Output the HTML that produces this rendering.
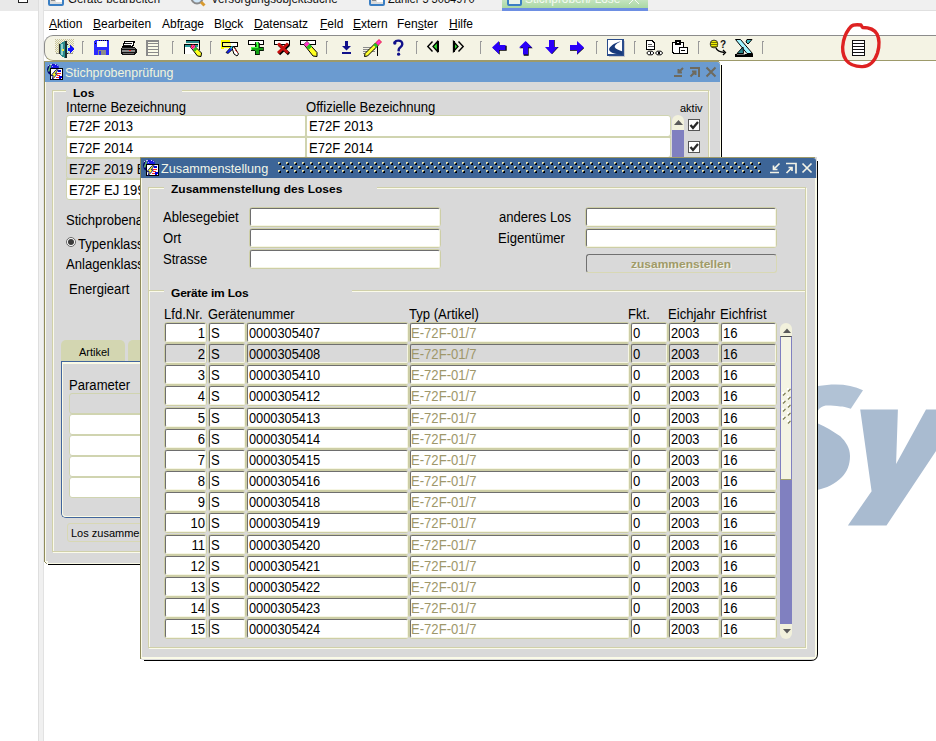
<!DOCTYPE html>
<html><head><meta charset="utf-8"><style>
html,body{margin:0;padding:0;width:936px;height:741px;overflow:hidden;background:#fff;position:relative;font-family:"Liberation Sans",sans-serif;}
.t{position:absolute;white-space:pre;font-family:"Liberation Sans",sans-serif;}
div{box-sizing:border-box;}
svg{overflow:visible}
.u{text-decoration:underline;text-underline-offset:1px;text-decoration-thickness:1px}
</style></head><body>
<div style="position:absolute;left:0px;top:0px;width:38px;height:11px;background:#e9e9e9"></div>
<div style="position:absolute;left:18px;top:-3px;width:10px;height:6px;border:1.5px solid #222;background:#fff"></div>
<div style="position:absolute;left:38px;top:0px;width:6px;height:741px;background:#f0f0f0;border-left:1px solid #dedede;border-right:1px solid #e2e2e2"></div>
<div style="position:absolute;left:44px;top:0px;width:892px;height:11px;background:#f0f0f0;border-bottom:1px solid #e0e0e0"></div>
<div style="position:absolute;left:48px;top:-6px;width:16px;height:12px;border:2px solid #3b7fc4;border-radius:2px;background:#dcdcdc"></div>
<div style="position:absolute;left:51px;top:0px;width:4px;height:1px;background:#8a8a8a"></div>
<div style="position:absolute;left:56px;top:-2px;width:6px;height:4px;background:#fff"></div>
<div class="t" style="left:68px;top:-8px;font-size:13px;line-height:13px;color:#111;transform:scaleX(0.88);transform-origin:0 0">Geräte bearbeiten</div>
<svg style="position:absolute;left:190px;top:-8px" width="16" height="15" viewBox="0 0 16 15" shape-rendering="crispEdges"><circle cx="7" cy="6" r="5.5" fill="#cfe6f7" stroke="#8a8a8a" stroke-width="2" shape-rendering="geometricPrecision"/><path d="M11 10 L14.5 13.5" stroke="#d89a30" stroke-width="3" shape-rendering="geometricPrecision"/></svg>
<div class="t" style="left:211px;top:-8px;font-size:13px;line-height:13px;color:#111;transform:scaleX(0.89);transform-origin:0 0">Versorgungsobjektsuche</div>
<div style="position:absolute;left:369px;top:-6px;width:16px;height:12px;border:2px solid #3b7fc4;border-radius:2px;background:#dcdcdc"></div>
<div style="position:absolute;left:372px;top:0px;width:4px;height:1px;background:#8a8a8a"></div>
<div style="position:absolute;left:377px;top:-2px;width:6px;height:4px;background:#fff"></div>
<div class="t" style="left:388px;top:-8px;font-size:13px;line-height:13px;color:#111;transform:scaleX(0.85);transform-origin:0 0">Zähler 5 3084970</div>
<div style="position:absolute;left:502px;top:0px;width:146px;height:11px;background:linear-gradient(#c4e4bf,#9fd39a)"></div>
<div style="position:absolute;left:502px;top:8px;width:146px;height:3px;background:#6d8fe3"></div>
<div style="position:absolute;left:507px;top:-6px;width:15px;height:12px;border:2px solid #3b7fc4;border-radius:2px;background:#eaf3ea"></div>
<div class="t" style="left:525px;top:-8px;font-size:13px;line-height:13px;color:#f4fbf2;transform:scaleX(0.91);transform-origin:0 0">Stichproben/ Lose</div>
<svg style="position:absolute;left:629px;top:-4px" width="11" height="9" viewBox="0 0 11 9" shape-rendering="crispEdges"><path d="M0 -2 L10 8 M10 -2 L0 8" stroke="#f6fbf6" stroke-width="1.3" fill="none"/></svg>
<div class="t" style="left:49px;top:18px;font-size:12px;line-height:12px;font-weight:normal;color:#000;"><span class="u">A</span>ktion</div>
<div class="t" style="left:93px;top:18px;font-size:12px;line-height:12px;font-weight:normal;color:#000;"><span class="u">B</span>earbeiten</div>
<div class="t" style="left:162px;top:18px;font-size:12px;line-height:12px;font-weight:normal;color:#000;">Abf<span class="u">r</span>age</div>
<div class="t" style="left:214px;top:18px;font-size:12px;line-height:12px;font-weight:normal;color:#000;">Bl<span class="u">o</span>ck</div>
<div class="t" style="left:254px;top:18px;font-size:12px;line-height:12px;font-weight:normal;color:#000;"><span class="u">D</span>atensatz</div>
<div class="t" style="left:320px;top:18px;font-size:12px;line-height:12px;font-weight:normal;color:#000;"><span class="u">F</span>eld</div>
<div class="t" style="left:353px;top:18px;font-size:12px;line-height:12px;font-weight:normal;color:#000;"><span class="u">E</span>xtern</div>
<div class="t" style="left:397px;top:18px;font-size:12px;line-height:12px;font-weight:normal;color:#000;">Fen<span class="u">s</span>ter</div>
<div class="t" style="left:449px;top:18px;font-size:12px;line-height:12px;font-weight:normal;color:#000;"><span class="u">H</span>ilfe</div>
<div style="position:absolute;left:44px;top:35px;width:892px;height:26px;background:#f4f3e4;border-top:1px solid #8c8c8c;border-bottom:1px solid #9d9a6a;border-left:1px solid #8c8c8c;border-radius:9px 0 0 9px"></div>
<div style="position:absolute;left:82px;top:41px;width:1px;height:13px;background:#9a9a9a"></div>
<div style="position:absolute;left:82px;top:41px;width:2px;height:1px;background:#9a9a9a"></div>
<div style="position:absolute;left:172px;top:41px;width:1px;height:13px;background:#9a9a9a"></div>
<div style="position:absolute;left:172px;top:41px;width:2px;height:1px;background:#9a9a9a"></div>
<div style="position:absolute;left:210px;top:41px;width:1px;height:13px;background:#9a9a9a"></div>
<div style="position:absolute;left:210px;top:41px;width:2px;height:1px;background:#9a9a9a"></div>
<div style="position:absolute;left:326px;top:41px;width:1px;height:13px;background:#9a9a9a"></div>
<div style="position:absolute;left:326px;top:41px;width:2px;height:1px;background:#9a9a9a"></div>
<div style="position:absolute;left:416px;top:41px;width:1px;height:13px;background:#9a9a9a"></div>
<div style="position:absolute;left:416px;top:41px;width:2px;height:1px;background:#9a9a9a"></div>
<div style="position:absolute;left:480px;top:41px;width:1px;height:13px;background:#9a9a9a"></div>
<div style="position:absolute;left:480px;top:41px;width:2px;height:1px;background:#9a9a9a"></div>
<div style="position:absolute;left:596px;top:41px;width:1px;height:13px;background:#9a9a9a"></div>
<div style="position:absolute;left:596px;top:41px;width:2px;height:1px;background:#9a9a9a"></div>
<div style="position:absolute;left:634px;top:41px;width:1px;height:13px;background:#9a9a9a"></div>
<div style="position:absolute;left:634px;top:41px;width:2px;height:1px;background:#9a9a9a"></div>
<div style="position:absolute;left:698px;top:41px;width:1px;height:13px;background:#9a9a9a"></div>
<div style="position:absolute;left:698px;top:41px;width:2px;height:1px;background:#9a9a9a"></div>
<div style="position:absolute;left:762px;top:41px;width:1px;height:13px;background:#9a9a9a"></div>
<div style="position:absolute;left:762px;top:41px;width:2px;height:1px;background:#9a9a9a"></div>
<svg style="position:absolute;left:55px;top:39px" width="19" height="19" viewBox="0 0 19 19" shape-rendering="crispEdges"><rect x="0" y="0" width="1" height="1" fill="#c9c59b"/><rect x="2" y="0" width="1" height="1" fill="#c9c59b"/><rect x="4" y="0" width="1" height="1" fill="#c9c59b"/><rect x="6" y="0" width="1" height="1" fill="#c9c59b"/><rect x="8" y="0" width="1" height="1" fill="#c9c59b"/><rect x="10" y="0" width="1" height="1" fill="#c9c59b"/><rect x="12" y="0" width="1" height="1" fill="#c9c59b"/><rect x="14" y="0" width="1" height="1" fill="#c9c59b"/><rect x="16" y="0" width="1" height="1" fill="#c9c59b"/><rect x="18" y="0" width="1" height="1" fill="#c9c59b"/><rect x="1" y="1" width="1" height="1" fill="#c9c59b"/><rect x="3" y="1" width="1" height="1" fill="#c9c59b"/><rect x="5" y="1" width="1" height="1" fill="#c9c59b"/><rect x="7" y="1" width="1" height="1" fill="#c9c59b"/><rect x="9" y="1" width="1" height="1" fill="#c9c59b"/><rect x="11" y="1" width="1" height="1" fill="#c9c59b"/><rect x="13" y="1" width="1" height="1" fill="#c9c59b"/><rect x="15" y="1" width="1" height="1" fill="#c9c59b"/><rect x="17" y="1" width="1" height="1" fill="#c9c59b"/><rect x="0" y="2" width="1" height="1" fill="#c9c59b"/><rect x="2" y="2" width="1" height="1" fill="#c9c59b"/><rect x="4" y="2" width="1" height="1" fill="#c9c59b"/><rect x="6" y="2" width="1" height="1" fill="#c9c59b"/><rect x="8" y="2" width="1" height="1" fill="#c9c59b"/><rect x="10" y="2" width="1" height="1" fill="#c9c59b"/><rect x="12" y="2" width="1" height="1" fill="#c9c59b"/><rect x="14" y="2" width="1" height="1" fill="#c9c59b"/><rect x="16" y="2" width="1" height="1" fill="#c9c59b"/><rect x="18" y="2" width="1" height="1" fill="#c9c59b"/><rect x="1" y="3" width="1" height="1" fill="#c9c59b"/><rect x="3" y="3" width="1" height="1" fill="#c9c59b"/><rect x="5" y="3" width="1" height="1" fill="#c9c59b"/><rect x="7" y="3" width="1" height="1" fill="#c9c59b"/><rect x="9" y="3" width="1" height="1" fill="#c9c59b"/><rect x="11" y="3" width="1" height="1" fill="#c9c59b"/><rect x="13" y="3" width="1" height="1" fill="#c9c59b"/><rect x="15" y="3" width="1" height="1" fill="#c9c59b"/><rect x="17" y="3" width="1" height="1" fill="#c9c59b"/><rect x="0" y="4" width="1" height="1" fill="#c9c59b"/><rect x="2" y="4" width="1" height="1" fill="#c9c59b"/><rect x="4" y="4" width="1" height="1" fill="#c9c59b"/><rect x="6" y="4" width="1" height="1" fill="#c9c59b"/><rect x="8" y="4" width="1" height="1" fill="#c9c59b"/><rect x="10" y="4" width="1" height="1" fill="#c9c59b"/><rect x="12" y="4" width="1" height="1" fill="#c9c59b"/><rect x="14" y="4" width="1" height="1" fill="#c9c59b"/><rect x="16" y="4" width="1" height="1" fill="#c9c59b"/><rect x="18" y="4" width="1" height="1" fill="#c9c59b"/><rect x="1" y="5" width="1" height="1" fill="#c9c59b"/><rect x="3" y="5" width="1" height="1" fill="#c9c59b"/><rect x="5" y="5" width="1" height="1" fill="#c9c59b"/><rect x="7" y="5" width="1" height="1" fill="#c9c59b"/><rect x="9" y="5" width="1" height="1" fill="#c9c59b"/><rect x="11" y="5" width="1" height="1" fill="#c9c59b"/><rect x="13" y="5" width="1" height="1" fill="#c9c59b"/><rect x="15" y="5" width="1" height="1" fill="#c9c59b"/><rect x="17" y="5" width="1" height="1" fill="#c9c59b"/><rect x="0" y="6" width="1" height="1" fill="#c9c59b"/><rect x="2" y="6" width="1" height="1" fill="#c9c59b"/><rect x="4" y="6" width="1" height="1" fill="#c9c59b"/><rect x="6" y="6" width="1" height="1" fill="#c9c59b"/><rect x="8" y="6" width="1" height="1" fill="#c9c59b"/><rect x="10" y="6" width="1" height="1" fill="#c9c59b"/><rect x="12" y="6" width="1" height="1" fill="#c9c59b"/><rect x="14" y="6" width="1" height="1" fill="#c9c59b"/><rect x="16" y="6" width="1" height="1" fill="#c9c59b"/><rect x="18" y="6" width="1" height="1" fill="#c9c59b"/><rect x="1" y="7" width="1" height="1" fill="#c9c59b"/><rect x="3" y="7" width="1" height="1" fill="#c9c59b"/><rect x="5" y="7" width="1" height="1" fill="#c9c59b"/><rect x="7" y="7" width="1" height="1" fill="#c9c59b"/><rect x="9" y="7" width="1" height="1" fill="#c9c59b"/><rect x="11" y="7" width="1" height="1" fill="#c9c59b"/><rect x="13" y="7" width="1" height="1" fill="#c9c59b"/><rect x="15" y="7" width="1" height="1" fill="#c9c59b"/><rect x="17" y="7" width="1" height="1" fill="#c9c59b"/><rect x="0" y="8" width="1" height="1" fill="#c9c59b"/><rect x="2" y="8" width="1" height="1" fill="#c9c59b"/><rect x="4" y="8" width="1" height="1" fill="#c9c59b"/><rect x="6" y="8" width="1" height="1" fill="#c9c59b"/><rect x="8" y="8" width="1" height="1" fill="#c9c59b"/><rect x="10" y="8" width="1" height="1" fill="#c9c59b"/><rect x="12" y="8" width="1" height="1" fill="#c9c59b"/><rect x="14" y="8" width="1" height="1" fill="#c9c59b"/><rect x="16" y="8" width="1" height="1" fill="#c9c59b"/><rect x="18" y="8" width="1" height="1" fill="#c9c59b"/><rect x="1" y="9" width="1" height="1" fill="#c9c59b"/><rect x="3" y="9" width="1" height="1" fill="#c9c59b"/><rect x="5" y="9" width="1" height="1" fill="#c9c59b"/><rect x="7" y="9" width="1" height="1" fill="#c9c59b"/><rect x="9" y="9" width="1" height="1" fill="#c9c59b"/><rect x="11" y="9" width="1" height="1" fill="#c9c59b"/><rect x="13" y="9" width="1" height="1" fill="#c9c59b"/><rect x="15" y="9" width="1" height="1" fill="#c9c59b"/><rect x="17" y="9" width="1" height="1" fill="#c9c59b"/><rect x="0" y="10" width="1" height="1" fill="#c9c59b"/><rect x="2" y="10" width="1" height="1" fill="#c9c59b"/><rect x="4" y="10" width="1" height="1" fill="#c9c59b"/><rect x="6" y="10" width="1" height="1" fill="#c9c59b"/><rect x="8" y="10" width="1" height="1" fill="#c9c59b"/><rect x="10" y="10" width="1" height="1" fill="#c9c59b"/><rect x="12" y="10" width="1" height="1" fill="#c9c59b"/><rect x="14" y="10" width="1" height="1" fill="#c9c59b"/><rect x="16" y="10" width="1" height="1" fill="#c9c59b"/><rect x="18" y="10" width="1" height="1" fill="#c9c59b"/><rect x="1" y="11" width="1" height="1" fill="#c9c59b"/><rect x="3" y="11" width="1" height="1" fill="#c9c59b"/><rect x="5" y="11" width="1" height="1" fill="#c9c59b"/><rect x="7" y="11" width="1" height="1" fill="#c9c59b"/><rect x="9" y="11" width="1" height="1" fill="#c9c59b"/><rect x="11" y="11" width="1" height="1" fill="#c9c59b"/><rect x="13" y="11" width="1" height="1" fill="#c9c59b"/><rect x="15" y="11" width="1" height="1" fill="#c9c59b"/><rect x="17" y="11" width="1" height="1" fill="#c9c59b"/><rect x="0" y="12" width="1" height="1" fill="#c9c59b"/><rect x="2" y="12" width="1" height="1" fill="#c9c59b"/><rect x="4" y="12" width="1" height="1" fill="#c9c59b"/><rect x="6" y="12" width="1" height="1" fill="#c9c59b"/><rect x="8" y="12" width="1" height="1" fill="#c9c59b"/><rect x="10" y="12" width="1" height="1" fill="#c9c59b"/><rect x="12" y="12" width="1" height="1" fill="#c9c59b"/><rect x="14" y="12" width="1" height="1" fill="#c9c59b"/><rect x="16" y="12" width="1" height="1" fill="#c9c59b"/><rect x="18" y="12" width="1" height="1" fill="#c9c59b"/><rect x="1" y="13" width="1" height="1" fill="#c9c59b"/><rect x="3" y="13" width="1" height="1" fill="#c9c59b"/><rect x="5" y="13" width="1" height="1" fill="#c9c59b"/><rect x="7" y="13" width="1" height="1" fill="#c9c59b"/><rect x="9" y="13" width="1" height="1" fill="#c9c59b"/><rect x="11" y="13" width="1" height="1" fill="#c9c59b"/><rect x="13" y="13" width="1" height="1" fill="#c9c59b"/><rect x="15" y="13" width="1" height="1" fill="#c9c59b"/><rect x="17" y="13" width="1" height="1" fill="#c9c59b"/><rect x="3" y="4" width="10" height="10" fill="#d6d2a4"/><rect x="1" y="14" width="17" height="1" fill="#9a9a90"/><rect x="4" y="5" width="2" height="10" fill="#222"/><rect x="10" y="5" width="3" height="2" fill="#222"/><rect x="12" y="5" width="1" height="10" fill="#222"/><path d="M5 5 L10 2 V19 L5 16 Z" fill="#2a8c8c"/><path d="M6 5.5 L8 4.5 V16.5 L6 15.5 Z" fill="#8fd0d0"/><rect x="10" y="2" width="1.5" height="17" fill="#1a3030"/><rect x="11.5" y="6" width="1" height="8" fill="#8ef4ff"/><rect x="7" y="10" width="2" height="2" fill="#f0f040"/><path d="M12.5 8.5 H15 V6 L19 10 L15 14 V11.5 H12.5 Z" fill="#1010ff"/></svg>
<svg style="position:absolute;left:94px;top:40px" width="15" height="15" viewBox="0 0 15 15" shape-rendering="crispEdges"><path d="M1 0 H15 V15 H0 V1 Z" fill="#2a2aff"/><rect x="3" y="1" width="10" height="6" fill="#fff"/><rect x="5" y="0" width="1" height="1" fill="#000"/><rect x="7" y="0" width="1" height="1" fill="#000"/><rect x="9" y="0" width="1" height="1" fill="#000"/><rect x="11" y="0" width="1" height="1" fill="#000"/><rect x="13" y="0" width="1" height="1" fill="#000"/><rect x="1" y="3" width="1" height="1" fill="#000"/><rect x="4" y="10" width="8" height="5" fill="#8a8a8a"/><rect x="5" y="11" width="2" height="4" fill="#2a2aff"/></svg>
<svg style="position:absolute;left:120px;top:41px" width="17" height="15" viewBox="0 0 17 15" shape-rendering="crispEdges"><path d="M5 0.5 H14.5 L12.5 6 H2.5 Z" fill="#fff" stroke="#000" stroke-width="1.2" stroke-linejoin="round"/><path d="M5 2.5 H12 M4 4 H11" stroke="#000" stroke-width="0.9"/><path d="M2 6 H15 L16.5 8 V12 L15 14 H2 L0.5 12 V8 Z" fill="#111"/><rect x="2" y="9" width="13" height="2" fill="#8a8a8a"/><rect x="9" y="9" width="2" height="1" fill="#ff2020"/><path d="M2 7 H15" stroke="#6a6a6a" stroke-width="1"/><path d="M3 12.5 H14" stroke="#6a6a6a" stroke-width="1"/></svg>
<svg style="position:absolute;left:146px;top:40px" width="13" height="16" viewBox="0 0 13 16" shape-rendering="crispEdges"><rect x="0.75" y="0.75" width="11.5" height="14.5" fill="#fafae8" stroke="#8a8a8a" stroke-width="1.5"/><path d="M1 3.75 H12 M1 6.75 H12 M1 9.75 H12 M1 12.5 H12" stroke="#8a8a8a" stroke-width="1.3"/></svg>
<svg style="position:absolute;left:184px;top:40px" width="18" height="17" viewBox="0 0 18 17" shape-rendering="crispEdges"><path d="M1.5 0.5 H15.5 V10" fill="none" stroke="#000" stroke-width="1"/><rect x="2" y="1" width="13" height="2" fill="#2a8a8a"/><rect x="0" y="4" width="14" height="1" fill="#000"/><rect x="0" y="5" width="14" height="2" fill="#2a9a9a"/><rect x="1" y="7" width="13" height="7" fill="#fff"/><rect x="0" y="4" width="1" height="10" fill="#000"/><path d="M6.5 7 L9 4.5 L17.5 13 L17 16.5 L13.5 16 Z" fill="#ffff20" stroke="#000" stroke-width="1" stroke-linejoin="round" shape-rendering="geometricPrecision"/><path d="M6.5 7 L9 4.5 L11.5 7 L9 9.5 Z" fill="#ff30d0" shape-rendering="geometricPrecision"/><path d="M7 6.5 L8 5.5 M8 8 L10.5 5.5" stroke="#ff2020" stroke-width="1"/><path d="M9 9.5 L11.5 7 L13.5 9 L11 11.5 Z" fill="#20c020" shape-rendering="geometricPrecision"/></svg>
<svg style="position:absolute;left:221px;top:40px" width="19" height="17" viewBox="0 0 19 17" shape-rendering="crispEdges"><path d="M0 0 H9 V8 H4 L2 9 H0 Z" fill="#ffff00"/><rect x="1.5" y="2.5" width="15" height="4" fill="#fff" stroke="#000" stroke-width="1"/><rect x="2" y="3" width="8" height="3" fill="#f4f0a0"/><rect x="3" y="3" width="1" height="1" fill="#ffff80"/><rect x="5" y="3" width="1" height="1" fill="#ffff80"/><rect x="7" y="3" width="1" height="1" fill="#ffff80"/><rect x="9" y="3" width="1" height="1" fill="#ffff80"/><rect x="2" y="4" width="1" height="1" fill="#ffff80"/><rect x="4" y="4" width="1" height="1" fill="#ffff80"/><rect x="6" y="4" width="1" height="1" fill="#ffff80"/><rect x="8" y="4" width="1" height="1" fill="#ffff80"/><rect x="3" y="5" width="1" height="1" fill="#ffff80"/><rect x="5" y="5" width="1" height="1" fill="#ffff80"/><rect x="7" y="5" width="1" height="1" fill="#ffff80"/><rect x="9" y="5" width="1" height="1" fill="#ffff80"/><path d="M5 12.5 L11 6 L13 8 L7 13.5 Z" fill="#1020ff" stroke="#000" stroke-width="0.8" shape-rendering="geometricPrecision"/><path d="M9 8 L11 6 L12.5 7.5 L10.5 9.5 Z" fill="#30e0ff" shape-rendering="geometricPrecision"/><path d="M11 8 L13 6.5 L17.5 14 L16 16 L13 14 Z" fill="#fff" stroke="#000" stroke-width="1" shape-rendering="geometricPrecision"/><path d="M13.5 8 L16.5 13" stroke="#e02020" stroke-width="0.8"/></svg>
<svg style="position:absolute;left:248px;top:40px" width="17" height="15" viewBox="0 0 17 15" shape-rendering="crispEdges"><rect x="0.5" y="0.5" width="15" height="4" fill="#fff" stroke="#000" stroke-width="1.3"/><path d="M7 2.5 H11 V7 H15 V10.5 H11 V14.5 H7 V10.5 H3 V7 H7 Z" fill="#10a010" stroke="#000" stroke-width="0.8"/><path d="M7.5 3 H9.5 V7.5 H3.5 V9.5 M9.5 7.5" stroke="#40ff40" stroke-width="1.3" fill="none"/></svg>
<svg style="position:absolute;left:274px;top:40px" width="17" height="15" viewBox="0 0 17 15" shape-rendering="crispEdges"><rect x="0.5" y="0.5" width="15" height="4" fill="#fff" stroke="#000" stroke-width="1.3"/><path d="M5 4.5 L15 14 M15 4.5 L5 14" stroke="#000" stroke-width="3.2" shape-rendering="geometricPrecision"/><path d="M4 3.5 L14 13 M14 3.5 L4 13" stroke="#c81010" stroke-width="3" shape-rendering="geometricPrecision"/></svg>
<svg style="position:absolute;left:300px;top:40px" width="18" height="17" viewBox="0 0 18 17" shape-rendering="crispEdges"><rect x="0.5" y="0.5" width="15" height="4" fill="#fff" stroke="#000" stroke-width="1.3"/><path d="M4 4.5 L7 1.5 L17 12.5 L17 16.5 L13 16 Z" fill="#ffff20" stroke="#000" stroke-width="1" stroke-linejoin="round" shape-rendering="geometricPrecision"/><path d="M4 4.5 L7 1.5 L9.5 4 L6.5 7 Z" fill="#ff30d0" shape-rendering="geometricPrecision"/><path d="M6.5 7 L9.5 4 L12 6.5 L9 9.5 Z" fill="#20c020" shape-rendering="geometricPrecision"/></svg>
<svg style="position:absolute;left:342px;top:41px" width="9" height="13" viewBox="0 0 9 13" shape-rendering="crispEdges"><rect x="3" y="0" width="3" height="5" fill="#10108a"/><path d="M0 5 H9 L4.5 9.5 Z" fill="#10108a" shape-rendering="geometricPrecision"/><rect x="0" y="11" width="9" height="1.6" fill="#10108a"/></svg>
<svg style="position:absolute;left:363px;top:39px" width="19" height="18" viewBox="0 0 19 18" shape-rendering="crispEdges"><path d="M0 8.5 H12 M0 10.5 H12 M0 12.5 H12 M0 14.5 H6" stroke="#8a8a8a" stroke-width="1"/><rect x="13.5" y="6" width="1.3" height="11" fill="#000"/><path d="M2 14.5 L12.5 4 L15 6.5 L4.5 17 L1.5 17.5 Z" fill="#ffff30" stroke="#000" stroke-width="1" stroke-linejoin="round" shape-rendering="geometricPrecision"/><path d="M12.5 4 L16 0.5 L18.5 3 L15 6.5 Z" fill="#ff30d0" stroke="#e01010" stroke-width="0.8" shape-rendering="geometricPrecision"/><path d="M10.5 6 L12.5 4 L15 6.5 L13 8.5 Z" fill="#20c020" shape-rendering="geometricPrecision"/></svg>
<svg style="position:absolute;left:393px;top:40px" width="11" height="16" viewBox="0 0 11 16" shape-rendering="crispEdges"><circle cx="1.8" cy="3" r="1.7" fill="#10108a" shape-rendering="geometricPrecision"/><path d="M1.5 2.5 C2.5 0.8 4 0.6 5.2 0.6 C7.8 0.6 9.3 2.2 9.3 4.2 C9.3 6.6 6.2 7.6 5.8 9.2 L5.6 11.3" stroke="#10108a" stroke-width="2.4" fill="none" shape-rendering="geometricPrecision"/><circle cx="5.6" cy="14.2" r="1.6" fill="#10108a" shape-rendering="geometricPrecision"/></svg>
<svg style="position:absolute;left:427px;top:41px" width="12" height="12" viewBox="0 0 12 12" shape-rendering="crispEdges"><path d="M5.5 0.5 L0.8 5.5 L5.5 10.5" fill="none" stroke="#000" stroke-width="1.4" shape-rendering="geometricPrecision"/><path d="M10.5 0.5 L6 5.5 L10.5 10.5 Z" fill="#30e030" stroke="#000" stroke-width="1.3" shape-rendering="geometricPrecision"/><rect x="9.5" y="0" width="2" height="11" fill="#000"/></svg>
<svg style="position:absolute;left:453px;top:41px" width="12" height="12" viewBox="0 0 12 12" shape-rendering="crispEdges"><path d="M5.5 0.5 L10.2 5.5 L5.5 10.5" fill="none" stroke="#000" stroke-width="1.4" shape-rendering="geometricPrecision"/><path d="M0.5 0.5 L5 5.5 L0.5 10.5 Z" fill="#30e030" stroke="#000" stroke-width="1.3" shape-rendering="geometricPrecision"/><rect x="0" y="0" width="1.5" height="11" fill="#000"/></svg>
<svg style="position:absolute;left:492px;top:41px" width="14" height="14" viewBox="0 0 14 14" shape-rendering="crispEdges"><path d="M0.5 6.5 L7 0 V4 H14 V9 H7 V13 Z" fill="#000" transform="translate(0.7,0.7)" shape-rendering="geometricPrecision"/><path d="M0 6.5 L7 0 V4 H13.5 V9 H7 V13 Z" fill="#2a00f8" shape-rendering="geometricPrecision"/></svg>
<svg style="position:absolute;left:519px;top:41px" width="14" height="15" viewBox="0 0 14 15" shape-rendering="crispEdges"><path d="M6.5 0 L13 6.5 H9 V14 H4 V6.5 H0 Z" fill="#000" transform="translate(0.7,0.7)" shape-rendering="geometricPrecision"/><path d="M6.5 0 L13 6.5 H9 V13.5 H4 V6.5 H0 Z" fill="#2a00f8" shape-rendering="geometricPrecision"/></svg>
<svg style="position:absolute;left:545px;top:40px" width="14" height="15" viewBox="0 0 14 15" shape-rendering="crispEdges"><path d="M6.5 14 L13 7 H9 V0 H4 V7 H0 Z" fill="#000" transform="translate(0.7,0)" shape-rendering="geometricPrecision"/><path d="M6.5 14 L13 7 H9 V0 H4 V7 H0 Z" fill="#2a00f8" shape-rendering="geometricPrecision"/></svg>
<svg style="position:absolute;left:570px;top:41px" width="15" height="14" viewBox="0 0 15 14" shape-rendering="crispEdges"><path d="M14 6.5 L7 0 V4 H0 V9 H7 V13 Z" fill="#000" transform="translate(0,0.7)" shape-rendering="geometricPrecision"/><path d="M14 6.5 L7 0 V4 H0 V9 H7 V13 Z" fill="#2a00f8" shape-rendering="geometricPrecision"/></svg>
<svg style="position:absolute;left:607px;top:39px" width="18" height="18" viewBox="0 0 18 18" shape-rendering="crispEdges"><rect x="1.5" y="1.5" width="16.5" height="16.5" fill="#cacaca"/><rect x="0.5" y="0.5" width="15.5" height="15.5" fill="#fff" stroke="#2a4c8c" stroke-width="1.1"/><path d="M13.7 2.6 C9 3.2 4 6.5 2.2 9.5 C1.5 12.2 5 14.2 10 15.1 L15.6 16 L15.6 12.6 C12 11.2 8.6 10 7.8 8.2 C7.4 6.5 10 4.3 13.7 2.6 Z" fill="#183a7c" shape-rendering="geometricPrecision"/></svg>
<svg style="position:absolute;left:646px;top:40px" width="18" height="16" viewBox="0 0 18 16" shape-rendering="crispEdges"><path d="M0.6 0.6 H6 L8.8 3.4 V9.4 H0.6 Z" fill="#fff" stroke="#000" stroke-width="1.2"/><path d="M2 4.5 H6 M2 6.5 H7.5" stroke="#555" stroke-width="1"/><path d="M0.8 13 L2.3 11.2 H6.3 L7.8 13 L6.3 14.8 H2.3 Z" fill="#fff" stroke="#000" stroke-width="1" shape-rendering="geometricPrecision"/><path d="M9.6 13 L11.1 11.2 H15.1 L16.6 13 L15.1 14.8 H11.1 Z" fill="#fff" stroke="#000" stroke-width="1" shape-rendering="geometricPrecision"/><rect x="3.6" y="12.4" width="1.6" height="1.2" fill="#000"/><rect x="12.4" y="12.4" width="1.6" height="1.2" fill="#000"/></svg>
<svg style="position:absolute;left:672px;top:40px" width="16" height="14" viewBox="0 0 16 14" shape-rendering="crispEdges"><rect x="0.7" y="2.2" width="11" height="11" rx="1.5" fill="#fff" stroke="#000" stroke-width="1.4"/><path d="M4 3 V1 H8 V3" fill="#fff" stroke="#000" stroke-width="1.2"/><rect x="3" y="3" width="6" height="1.5" fill="#000"/><rect x="7.7" y="7.7" width="7.5" height="5.5" fill="#fff" stroke="#000" stroke-width="1.4"/><path d="M9 10 H13" stroke="#000" stroke-width="1"/></svg>
<svg style="position:absolute;left:710px;top:40px" width="17" height="15" viewBox="0 0 17 15" shape-rendering="crispEdges"><ellipse cx="4" cy="4" rx="3.8" ry="3.9" fill="#f0f000" stroke="#333" stroke-width="1" shape-rendering="geometricPrecision"/><path d="M0.5 2.5 H7.5 M0.5 4.5 H7.5 M0.5 6.5 H7.5" stroke="#6a6a00" stroke-width="0.9"/><path d="M6 8 C7 11 10 12 14.5 12.5" stroke="#000" stroke-width="1.4" fill="none" shape-rendering="geometricPrecision"/><path d="M13 10 L15.5 12.5 L13 15" stroke="#000" stroke-width="1.3" fill="none" shape-rendering="geometricPrecision"/></svg>
<div class="t" style="left:720px;top:40px;font-size:10px;line-height:10px;font-weight:bold;color:#111">?</div>
<svg style="position:absolute;left:735px;top:39px" width="19" height="18" viewBox="0 0 19 18" shape-rendering="crispEdges"><path d="M0.5 0.5 H5.5 L17.5 14.5 H12 Z" fill="#a0f4ff" stroke="#000" stroke-width="1" shape-rendering="geometricPrecision"/><path d="M12 0.5 H17 L13 5 L11 3 Z" fill="#40c0c8" stroke="#000" stroke-width="1" shape-rendering="geometricPrecision"/><path d="M8 8 L2 14.5 H8.5 Z" fill="#2a8a90" stroke="#000" stroke-width="1" shape-rendering="geometricPrecision"/><rect x="0" y="14.5" width="18" height="3" fill="#000"/><rect x="2" y="14.5" width="8" height="1" fill="#707070"/></svg>
<svg style="position:absolute;left:852px;top:40px" width="13" height="16" viewBox="0 0 13 16" shape-rendering="crispEdges"><rect x="0.5" y="0.5" width="12" height="15" fill="#fff" stroke="#111" stroke-width="1.2"/><path d="M1 3.5 H12 M1 6.5 H12 M1 9.5 H12 M1 12.5 H12" stroke="#111" stroke-width="1.2"/></svg>
<div style="position:absolute;left:44px;top:61px;width:677px;height:503px;background:#d9d9d9;border-radius:0 0 0 4px"></div>
<div style="position:absolute;left:44px;top:61px;width:1px;height:500px;background:#8f8b5c"></div>
<div style="position:absolute;left:45px;top:82px;width:1px;height:480px;background:#fbfbe8"></div>
<div style="position:absolute;left:720px;top:62px;width:1px;height:502px;background:#fbfbe8"></div>
<div style="position:absolute;left:46px;top:563px;width:675px;height:1px;background:#fbfbe8"></div>
<div style="position:absolute;left:721px;top:65px;width:1px;height:500px;background:#000"></div>
<div style="position:absolute;left:48px;top:564px;width:674px;height:1px;background:#000"></div>
<div style="position:absolute;left:44px;top:561px;width:4px;height:4px;background:#fff"></div>
<div style="position:absolute;left:46px;top:561px;width:2px;height:2px;background:#fbfbe8"></div>
<div style="position:absolute;left:44px;top:561px;width:1px;height:1px;background:#8f8b5c"></div>
<div style="position:absolute;left:45px;top:562px;width:1px;height:1px;background:#8f8b5c"></div>
<div style="position:absolute;left:46px;top:563px;width:1px;height:1px;background:#a0a080"></div>
<div style="position:absolute;left:44px;top:61px;width:675px;height:1px;background:#9d9a6a"></div>
<div style="position:absolute;left:719px;top:61px;width:3px;height:4px;background:#fff"></div>
<div style="position:absolute;left:719px;top:62px;width:1px;height:1px;background:#b8b490"></div>
<div style="position:absolute;left:720px;top:63px;width:1px;height:2px;background:#fbfbe8"></div>
<div style="position:absolute;left:45px;top:62px;width:675px;height:20px;background:#6b9bd0;border-radius:0 3px 0 0"></div>
<svg style="position:absolute;left:44px;top:60px" width="24" height="24" viewBox="0 0 24 24" shape-rendering="crispEdges"><circle cx="8.8" cy="9.6" r="5.8" fill="#000070" shape-rendering="geometricPrecision"/><ellipse cx="10.2" cy="7.2" rx="4.6" ry="3.2" fill="#1818e0" shape-rendering="geometricPrecision"/><rect x="4" y="5" width="1" height="1" fill="#c8b8ff"/><rect x="6" y="4" width="2" height="1" fill="#c8b8ff"/><rect x="8" y="6" width="1" height="1" fill="#b0a0ff"/><rect x="11" y="4" width="1" height="1" fill="#d0c8ff"/><rect x="13" y="5" width="1" height="1" fill="#9090ff"/><path d="M6.8 5 L4.5 11.5" stroke="#5aa870" stroke-width="1.8" shape-rendering="geometricPrecision"/><rect x="6.6" y="8.4" width="12" height="11.2" fill="#fff" stroke="#000" stroke-width="1.2"/><path d="M12 9.8 L14.2 9.8 L11.2 13.8 L13.4 13.8 L8.2 19.6 L9.2 15.6 L7 15.6 Z" fill="#ffff20" stroke="#00007a" stroke-width="0.9" stroke-linejoin="round" shape-rendering="geometricPrecision"/><rect x="14" y="10" width="3" height="2" fill="#0000d8"/><rect x="13" y="13" width="4" height="1" fill="#ff2020"/><rect x="13" y="15" width="3" height="1" fill="#ff2020"/><rect x="12" y="17" width="3" height="1" fill="#ff2020"/><rect x="15" y="16" width="3" height="3" fill="#0000d8"/><rect x="17" y="18" width="1" height="1" fill="#fff"/></svg>
<div class="t" style="left:65px;top:66px;font-size:13px;line-height:13px;color:#f0f4dc;transform:scaleX(0.955);transform-origin:0 0">Stichprobenprüfung</div>
<svg style="position:absolute;left:674px;top:67px" width="44" height="11" viewBox="0 0 44 11" shape-rendering="crispEdges"><g stroke="#6e6a5e" stroke-width="2" fill="none" shape-rendering="geometricPrecision"><path d="M0 9 H8 M9 1 L4.5 5.5 M4.5 2 V5.5 H8"/><path d="M16 1 H25 V10 M16.5 9.5 L21.5 4.5 M18 4.5 H21.5 V8"/><path d="M32.5 0.5 L41.5 9.5 M41.5 0.5 L32.5 9.5"/></g></svg>
<div style="position:absolute;left:53px;top:91px;width:657px;height:462px;border:1px solid #fbfbea"></div>
<div style="position:absolute;left:52px;top:90px;width:657px;height:462px;border:1px solid #d0d0aa"></div>
<div style="position:absolute;left:66px;top:89px;width:116px;height:4px;background:#d9d9d9"></div>
<div class="t" style="left:73px;top:88px;font-size:12px;line-height:12px;font-weight:bold;color:#000;transform:scaleY(0.9);transform-origin:0 1px;">Los</div>
<div class="t" style="left:66px;top:100px;font-size:14px;line-height:14px;font-weight:normal;color:#000;transform:scaleX(0.935);transform-origin:0 0;">Interne Bezeichnung</div>
<div class="t" style="left:306px;top:100px;font-size:14px;line-height:14px;font-weight:normal;color:#000;transform:scaleX(0.935);transform-origin:0 0;">Offizielle Bezeichnung</div>
<div class="t" style="left:680px;top:103px;font-size:11px;line-height:11px;color:#000">aktiv</div>
<div style="position:absolute;left:66px;top:115px;width:241px;height:22px;background:#fff;border:1px solid #d0d4b0;border-radius:3px"></div>
<div style="position:absolute;left:305px;top:115px;width:366px;height:22px;background:#fff;border:1px solid #d0d4b0;border-radius:3px"></div>
<div class="t" style="left:69px;top:119px;font-size:14px;line-height:14px;font-weight:normal;color:#000;transform:scaleX(0.935);transform-origin:0 0;">E72F 2013</div>
<div class="t" style="left:309px;top:119px;font-size:14px;line-height:14px;font-weight:normal;color:#000;transform:scaleX(0.935);transform-origin:0 0;">E72F 2013</div>
<div style="position:absolute;left:66px;top:136px;width:241px;height:22px;background:#fff;border:1px solid #d0d4b0;border-radius:3px"></div>
<div style="position:absolute;left:305px;top:136px;width:366px;height:22px;background:#fff;border:1px solid #d0d4b0;border-radius:3px"></div>
<div style="position:absolute;left:66px;top:136px;width:605px;height:2px;background:#d0d4b0;border-radius:0"></div>
<div style="position:absolute;left:67px;top:138px;width:238px;height:0px;"></div>
<div class="t" style="left:69px;top:141px;font-size:14px;line-height:14px;font-weight:normal;color:#000;transform:scaleX(0.935);transform-origin:0 0;">E72F 2014</div>
<div class="t" style="left:309px;top:141px;font-size:14px;line-height:14px;font-weight:normal;color:#000;transform:scaleX(0.935);transform-origin:0 0;">E72F 2014</div>
<div style="position:absolute;left:66px;top:157px;width:241px;height:22px;background:#d9d9d9;border:1px solid #d0d4b0;border-radius:3px"></div>
<div style="position:absolute;left:305px;top:157px;width:366px;height:22px;background:#d9d9d9;border:1px solid #d0d4b0;border-radius:3px"></div>
<div style="position:absolute;left:66px;top:157px;width:605px;height:2px;background:#d0d4b0;border-radius:0"></div>
<div style="position:absolute;left:67px;top:159px;width:238px;height:0px;"></div>
<div class="t" style="left:69px;top:162px;font-size:14px;line-height:14px;font-weight:normal;color:#000;transform:scaleX(0.935);transform-origin:0 0;">E72F 2019 Bauart</div>
<div class="t" style="left:309px;top:162px;font-size:14px;line-height:14px;font-weight:normal;color:#000;transform:scaleX(0.935);transform-origin:0 0;">E72F 2019</div>
<div style="position:absolute;left:66px;top:178px;width:241px;height:22px;background:#fff;border:1px solid #d0d4b0;border-radius:3px"></div>
<div style="position:absolute;left:305px;top:178px;width:366px;height:22px;background:#fff;border:1px solid #d0d4b0;border-radius:3px"></div>
<div style="position:absolute;left:66px;top:178px;width:605px;height:2px;background:#d0d4b0;border-radius:0"></div>
<div style="position:absolute;left:67px;top:180px;width:238px;height:0px;"></div>
<div class="t" style="left:69px;top:183px;font-size:14px;line-height:14px;font-weight:normal;color:#000;transform:scaleX(0.935);transform-origin:0 0;">E72F EJ 1999</div>
<div class="t" style="left:309px;top:183px;font-size:14px;line-height:14px;font-weight:normal;color:#000;transform:scaleX(0.935);transform-origin:0 0;">E72F EJ 1999</div>
<div style="position:absolute;left:305px;top:115px;width:2px;height:85px;background:#d0d4b0"></div>
<div style="position:absolute;left:672px;top:130px;width:12px;height:30px;background:#8080c0"></div>
<div style="position:absolute;left:672px;top:115px;width:12px;height:15px;background:#f2f1dc;border-radius:6px 6px 0 0"></div>
<svg style="position:absolute;left:674px;top:120px" width="9" height="5" viewBox="0 0 9 5" shape-rendering="crispEdges"><path d="M0 5 L4.5 0 L9 5 Z" fill="#5a5a5a" shape-rendering="geometricPrecision"/></svg>
<div style="position:absolute;left:688px;top:119px;width:12px;height:12px;background:#fff;border:1px solid #555"></div>
<svg style="position:absolute;left:688px;top:119px" width="12" height="12" viewBox="0 0 12 12" shape-rendering="crispEdges"><path d="M2.5 6 L5 9 L10 3" stroke="#2a2a2a" stroke-width="2.3" fill="none" shape-rendering="geometricPrecision"/></svg>
<div style="position:absolute;left:688px;top:141px;width:12px;height:12px;background:#fff;border:1px solid #555"></div>
<svg style="position:absolute;left:688px;top:141px" width="12" height="12" viewBox="0 0 12 12" shape-rendering="crispEdges"><path d="M2.5 6 L5 9 L10 3" stroke="#2a2a2a" stroke-width="2.3" fill="none" shape-rendering="geometricPrecision"/></svg>
<div class="t" style="left:66px;top:213px;font-size:14px;line-height:14px;font-weight:normal;color:#000;transform:scaleX(0.935);transform-origin:0 0;">Stichprobenart</div>
<svg style="position:absolute;left:66px;top:237px" width="10" height="10" viewBox="0 0 10 10" shape-rendering="crispEdges"><circle cx="5" cy="5" r="4.5" fill="#fff" stroke="#666" stroke-width="1" shape-rendering="geometricPrecision"/><circle cx="5" cy="5" r="3" fill="#3a3a3a" shape-rendering="geometricPrecision"/></svg>
<div class="t" style="left:78px;top:237px;font-size:14px;line-height:14px;font-weight:normal;color:#000;transform:scaleX(0.935);transform-origin:0 0;">Typenklasse</div>
<div class="t" style="left:66px;top:257px;font-size:14px;line-height:14px;font-weight:normal;color:#000;transform:scaleX(0.935);transform-origin:0 0;">Anlagenklasse</div>
<div class="t" style="left:69px;top:282px;font-size:14px;line-height:14px;font-weight:normal;color:#000;transform:scaleX(0.935);transform-origin:0 0;">Energieart</div>
<div style="position:absolute;left:61px;top:340px;width:64px;height:21px;background:#d3d6b1;border-radius:5px 5px 0 0"></div>
<div style="position:absolute;left:128px;top:340px;width:64px;height:21px;background:#d3d6b1;border-radius:5px 5px 0 0"></div>
<div class="t" style="left:79px;top:347px;font-size:11px;line-height:11px;color:#000">Artikel</div>
<div style="position:absolute;left:61px;top:361px;width:200px;height:157px;border:1px solid #41659c;border-right:none;border-radius:0 0 0 5px"></div>
<div style="position:absolute;left:62px;top:362px;width:199px;height:155px;border-top:2px solid #fbfbe6;border-left:1px solid #fbfbe6;border-bottom:1px solid #fbfbe6;border-radius:0 0 0 4px"></div>
<div class="t" style="left:69px;top:378px;font-size:14px;line-height:14px;font-weight:normal;color:#000;transform:scaleX(0.935);transform-origin:0 0;">Parameter</div>
<div style="position:absolute;left:69px;top:393px;width:132px;height:21px;background:#d9d9d9;border:1px solid #d0d4b0;border-radius:3px"></div>
<div style="position:absolute;left:69px;top:414px;width:132px;height:21px;background:#fff;border:1px solid #d0d4b0;border-radius:3px"></div>
<div style="position:absolute;left:69px;top:435px;width:132px;height:21px;background:#fff;border:1px solid #d0d4b0;border-radius:3px"></div>
<div style="position:absolute;left:69px;top:456px;width:132px;height:21px;background:#fff;border:1px solid #d0d4b0;border-radius:3px"></div>
<div style="position:absolute;left:69px;top:477px;width:132px;height:21px;background:#fff;border:1px solid #d0d4b0;border-radius:3px"></div>
<div style="position:absolute;left:67px;top:523px;width:100px;height:19px;border:1px solid #d8d8b4;border-radius:3px"></div>
<div class="t" style="left:71px;top:528px;font-size:11px;line-height:11px;color:#000">Los zusammenstellen</div>
<div style="position:absolute;left:140px;top:157px;width:677px;height:503px;background:#d9d9d9;border-radius:0 0 6px 4px"></div>
<div style="position:absolute;left:140px;top:157px;width:1px;height:502px;background:#8f8b5c"></div>
<div style="position:absolute;left:141px;top:178px;width:1px;height:480px;background:#fbfbe8"></div>
<div style="position:absolute;left:815px;top:178px;width:2px;height:481px;background:#fbfbe8"></div>
<div style="position:absolute;left:142px;top:657px;width:675px;height:2px;background:#fbfbe8"></div>
<div style="position:absolute;left:817px;top:161px;width:1px;height:492px;background:#000"></div>
<div style="position:absolute;left:144px;top:660px;width:666px;height:1px;background:#000"></div>
<svg style="position:absolute;left:806px;top:650px" width="12" height="11" viewBox="0 0 12 11" shape-rendering="crispEdges"><path d="M11.5 0 V4 Q11.5 10.5 5 10.5 H0" stroke="#000" stroke-width="1" fill="none" shape-rendering="geometricPrecision"/></svg>
<div style="position:absolute;left:140px;top:157px;width:675px;height:1px;background:#9d9a6a"></div>
<div style="position:absolute;left:141px;top:158px;width:675px;height:20px;background:#3d6597;border-radius:0 3px 0 0"></div>
<svg style="position:absolute;left:278px;top:163px" width="490" height="12" viewBox="0 0 490 12" shape-rendering="crispEdges"><rect x="0" y="-1" width="2" height="2" fill="#e6e2b2"/><rect x="1" y="0" width="1" height="1" fill="#6a6a58"/><rect x="2" y="0" width="1" height="2" fill="#000"/><rect x="1" y="1" width="1" height="1" fill="#000"/><rect x="8" y="-1" width="2" height="2" fill="#e6e2b2"/><rect x="9" y="0" width="1" height="1" fill="#6a6a58"/><rect x="10" y="0" width="1" height="2" fill="#000"/><rect x="9" y="1" width="1" height="1" fill="#000"/><rect x="16" y="-1" width="2" height="2" fill="#e6e2b2"/><rect x="17" y="0" width="1" height="1" fill="#6a6a58"/><rect x="18" y="0" width="1" height="2" fill="#000"/><rect x="17" y="1" width="1" height="1" fill="#000"/><rect x="24" y="-1" width="2" height="2" fill="#e6e2b2"/><rect x="25" y="0" width="1" height="1" fill="#6a6a58"/><rect x="26" y="0" width="1" height="2" fill="#000"/><rect x="25" y="1" width="1" height="1" fill="#000"/><rect x="32" y="-1" width="2" height="2" fill="#e6e2b2"/><rect x="33" y="0" width="1" height="1" fill="#6a6a58"/><rect x="34" y="0" width="1" height="2" fill="#000"/><rect x="33" y="1" width="1" height="1" fill="#000"/><rect x="40" y="-1" width="2" height="2" fill="#e6e2b2"/><rect x="41" y="0" width="1" height="1" fill="#6a6a58"/><rect x="42" y="0" width="1" height="2" fill="#000"/><rect x="41" y="1" width="1" height="1" fill="#000"/><rect x="48" y="-1" width="2" height="2" fill="#e6e2b2"/><rect x="49" y="0" width="1" height="1" fill="#6a6a58"/><rect x="50" y="0" width="1" height="2" fill="#000"/><rect x="49" y="1" width="1" height="1" fill="#000"/><rect x="56" y="-1" width="2" height="2" fill="#e6e2b2"/><rect x="57" y="0" width="1" height="1" fill="#6a6a58"/><rect x="58" y="0" width="1" height="2" fill="#000"/><rect x="57" y="1" width="1" height="1" fill="#000"/><rect x="64" y="-1" width="2" height="2" fill="#e6e2b2"/><rect x="65" y="0" width="1" height="1" fill="#6a6a58"/><rect x="66" y="0" width="1" height="2" fill="#000"/><rect x="65" y="1" width="1" height="1" fill="#000"/><rect x="72" y="-1" width="2" height="2" fill="#e6e2b2"/><rect x="73" y="0" width="1" height="1" fill="#6a6a58"/><rect x="74" y="0" width="1" height="2" fill="#000"/><rect x="73" y="1" width="1" height="1" fill="#000"/><rect x="80" y="-1" width="2" height="2" fill="#e6e2b2"/><rect x="81" y="0" width="1" height="1" fill="#6a6a58"/><rect x="82" y="0" width="1" height="2" fill="#000"/><rect x="81" y="1" width="1" height="1" fill="#000"/><rect x="88" y="-1" width="2" height="2" fill="#e6e2b2"/><rect x="89" y="0" width="1" height="1" fill="#6a6a58"/><rect x="90" y="0" width="1" height="2" fill="#000"/><rect x="89" y="1" width="1" height="1" fill="#000"/><rect x="96" y="-1" width="2" height="2" fill="#e6e2b2"/><rect x="97" y="0" width="1" height="1" fill="#6a6a58"/><rect x="98" y="0" width="1" height="2" fill="#000"/><rect x="97" y="1" width="1" height="1" fill="#000"/><rect x="104" y="-1" width="2" height="2" fill="#e6e2b2"/><rect x="105" y="0" width="1" height="1" fill="#6a6a58"/><rect x="106" y="0" width="1" height="2" fill="#000"/><rect x="105" y="1" width="1" height="1" fill="#000"/><rect x="112" y="-1" width="2" height="2" fill="#e6e2b2"/><rect x="113" y="0" width="1" height="1" fill="#6a6a58"/><rect x="114" y="0" width="1" height="2" fill="#000"/><rect x="113" y="1" width="1" height="1" fill="#000"/><rect x="120" y="-1" width="2" height="2" fill="#e6e2b2"/><rect x="121" y="0" width="1" height="1" fill="#6a6a58"/><rect x="122" y="0" width="1" height="2" fill="#000"/><rect x="121" y="1" width="1" height="1" fill="#000"/><rect x="128" y="-1" width="2" height="2" fill="#e6e2b2"/><rect x="129" y="0" width="1" height="1" fill="#6a6a58"/><rect x="130" y="0" width="1" height="2" fill="#000"/><rect x="129" y="1" width="1" height="1" fill="#000"/><rect x="136" y="-1" width="2" height="2" fill="#e6e2b2"/><rect x="137" y="0" width="1" height="1" fill="#6a6a58"/><rect x="138" y="0" width="1" height="2" fill="#000"/><rect x="137" y="1" width="1" height="1" fill="#000"/><rect x="144" y="-1" width="2" height="2" fill="#e6e2b2"/><rect x="145" y="0" width="1" height="1" fill="#6a6a58"/><rect x="146" y="0" width="1" height="2" fill="#000"/><rect x="145" y="1" width="1" height="1" fill="#000"/><rect x="152" y="-1" width="2" height="2" fill="#e6e2b2"/><rect x="153" y="0" width="1" height="1" fill="#6a6a58"/><rect x="154" y="0" width="1" height="2" fill="#000"/><rect x="153" y="1" width="1" height="1" fill="#000"/><rect x="160" y="-1" width="2" height="2" fill="#e6e2b2"/><rect x="161" y="0" width="1" height="1" fill="#6a6a58"/><rect x="162" y="0" width="1" height="2" fill="#000"/><rect x="161" y="1" width="1" height="1" fill="#000"/><rect x="168" y="-1" width="2" height="2" fill="#e6e2b2"/><rect x="169" y="0" width="1" height="1" fill="#6a6a58"/><rect x="170" y="0" width="1" height="2" fill="#000"/><rect x="169" y="1" width="1" height="1" fill="#000"/><rect x="176" y="-1" width="2" height="2" fill="#e6e2b2"/><rect x="177" y="0" width="1" height="1" fill="#6a6a58"/><rect x="178" y="0" width="1" height="2" fill="#000"/><rect x="177" y="1" width="1" height="1" fill="#000"/><rect x="184" y="-1" width="2" height="2" fill="#e6e2b2"/><rect x="185" y="0" width="1" height="1" fill="#6a6a58"/><rect x="186" y="0" width="1" height="2" fill="#000"/><rect x="185" y="1" width="1" height="1" fill="#000"/><rect x="192" y="-1" width="2" height="2" fill="#e6e2b2"/><rect x="193" y="0" width="1" height="1" fill="#6a6a58"/><rect x="194" y="0" width="1" height="2" fill="#000"/><rect x="193" y="1" width="1" height="1" fill="#000"/><rect x="200" y="-1" width="2" height="2" fill="#e6e2b2"/><rect x="201" y="0" width="1" height="1" fill="#6a6a58"/><rect x="202" y="0" width="1" height="2" fill="#000"/><rect x="201" y="1" width="1" height="1" fill="#000"/><rect x="208" y="-1" width="2" height="2" fill="#e6e2b2"/><rect x="209" y="0" width="1" height="1" fill="#6a6a58"/><rect x="210" y="0" width="1" height="2" fill="#000"/><rect x="209" y="1" width="1" height="1" fill="#000"/><rect x="216" y="-1" width="2" height="2" fill="#e6e2b2"/><rect x="217" y="0" width="1" height="1" fill="#6a6a58"/><rect x="218" y="0" width="1" height="2" fill="#000"/><rect x="217" y="1" width="1" height="1" fill="#000"/><rect x="224" y="-1" width="2" height="2" fill="#e6e2b2"/><rect x="225" y="0" width="1" height="1" fill="#6a6a58"/><rect x="226" y="0" width="1" height="2" fill="#000"/><rect x="225" y="1" width="1" height="1" fill="#000"/><rect x="232" y="-1" width="2" height="2" fill="#e6e2b2"/><rect x="233" y="0" width="1" height="1" fill="#6a6a58"/><rect x="234" y="0" width="1" height="2" fill="#000"/><rect x="233" y="1" width="1" height="1" fill="#000"/><rect x="240" y="-1" width="2" height="2" fill="#e6e2b2"/><rect x="241" y="0" width="1" height="1" fill="#6a6a58"/><rect x="242" y="0" width="1" height="2" fill="#000"/><rect x="241" y="1" width="1" height="1" fill="#000"/><rect x="248" y="-1" width="2" height="2" fill="#e6e2b2"/><rect x="249" y="0" width="1" height="1" fill="#6a6a58"/><rect x="250" y="0" width="1" height="2" fill="#000"/><rect x="249" y="1" width="1" height="1" fill="#000"/><rect x="256" y="-1" width="2" height="2" fill="#e6e2b2"/><rect x="257" y="0" width="1" height="1" fill="#6a6a58"/><rect x="258" y="0" width="1" height="2" fill="#000"/><rect x="257" y="1" width="1" height="1" fill="#000"/><rect x="264" y="-1" width="2" height="2" fill="#e6e2b2"/><rect x="265" y="0" width="1" height="1" fill="#6a6a58"/><rect x="266" y="0" width="1" height="2" fill="#000"/><rect x="265" y="1" width="1" height="1" fill="#000"/><rect x="272" y="-1" width="2" height="2" fill="#e6e2b2"/><rect x="273" y="0" width="1" height="1" fill="#6a6a58"/><rect x="274" y="0" width="1" height="2" fill="#000"/><rect x="273" y="1" width="1" height="1" fill="#000"/><rect x="280" y="-1" width="2" height="2" fill="#e6e2b2"/><rect x="281" y="0" width="1" height="1" fill="#6a6a58"/><rect x="282" y="0" width="1" height="2" fill="#000"/><rect x="281" y="1" width="1" height="1" fill="#000"/><rect x="288" y="-1" width="2" height="2" fill="#e6e2b2"/><rect x="289" y="0" width="1" height="1" fill="#6a6a58"/><rect x="290" y="0" width="1" height="2" fill="#000"/><rect x="289" y="1" width="1" height="1" fill="#000"/><rect x="296" y="-1" width="2" height="2" fill="#e6e2b2"/><rect x="297" y="0" width="1" height="1" fill="#6a6a58"/><rect x="298" y="0" width="1" height="2" fill="#000"/><rect x="297" y="1" width="1" height="1" fill="#000"/><rect x="304" y="-1" width="2" height="2" fill="#e6e2b2"/><rect x="305" y="0" width="1" height="1" fill="#6a6a58"/><rect x="306" y="0" width="1" height="2" fill="#000"/><rect x="305" y="1" width="1" height="1" fill="#000"/><rect x="312" y="-1" width="2" height="2" fill="#e6e2b2"/><rect x="313" y="0" width="1" height="1" fill="#6a6a58"/><rect x="314" y="0" width="1" height="2" fill="#000"/><rect x="313" y="1" width="1" height="1" fill="#000"/><rect x="320" y="-1" width="2" height="2" fill="#e6e2b2"/><rect x="321" y="0" width="1" height="1" fill="#6a6a58"/><rect x="322" y="0" width="1" height="2" fill="#000"/><rect x="321" y="1" width="1" height="1" fill="#000"/><rect x="328" y="-1" width="2" height="2" fill="#e6e2b2"/><rect x="329" y="0" width="1" height="1" fill="#6a6a58"/><rect x="330" y="0" width="1" height="2" fill="#000"/><rect x="329" y="1" width="1" height="1" fill="#000"/><rect x="336" y="-1" width="2" height="2" fill="#e6e2b2"/><rect x="337" y="0" width="1" height="1" fill="#6a6a58"/><rect x="338" y="0" width="1" height="2" fill="#000"/><rect x="337" y="1" width="1" height="1" fill="#000"/><rect x="344" y="-1" width="2" height="2" fill="#e6e2b2"/><rect x="345" y="0" width="1" height="1" fill="#6a6a58"/><rect x="346" y="0" width="1" height="2" fill="#000"/><rect x="345" y="1" width="1" height="1" fill="#000"/><rect x="352" y="-1" width="2" height="2" fill="#e6e2b2"/><rect x="353" y="0" width="1" height="1" fill="#6a6a58"/><rect x="354" y="0" width="1" height="2" fill="#000"/><rect x="353" y="1" width="1" height="1" fill="#000"/><rect x="360" y="-1" width="2" height="2" fill="#e6e2b2"/><rect x="361" y="0" width="1" height="1" fill="#6a6a58"/><rect x="362" y="0" width="1" height="2" fill="#000"/><rect x="361" y="1" width="1" height="1" fill="#000"/><rect x="368" y="-1" width="2" height="2" fill="#e6e2b2"/><rect x="369" y="0" width="1" height="1" fill="#6a6a58"/><rect x="370" y="0" width="1" height="2" fill="#000"/><rect x="369" y="1" width="1" height="1" fill="#000"/><rect x="376" y="-1" width="2" height="2" fill="#e6e2b2"/><rect x="377" y="0" width="1" height="1" fill="#6a6a58"/><rect x="378" y="0" width="1" height="2" fill="#000"/><rect x="377" y="1" width="1" height="1" fill="#000"/><rect x="384" y="-1" width="2" height="2" fill="#e6e2b2"/><rect x="385" y="0" width="1" height="1" fill="#6a6a58"/><rect x="386" y="0" width="1" height="2" fill="#000"/><rect x="385" y="1" width="1" height="1" fill="#000"/><rect x="392" y="-1" width="2" height="2" fill="#e6e2b2"/><rect x="393" y="0" width="1" height="1" fill="#6a6a58"/><rect x="394" y="0" width="1" height="2" fill="#000"/><rect x="393" y="1" width="1" height="1" fill="#000"/><rect x="400" y="-1" width="2" height="2" fill="#e6e2b2"/><rect x="401" y="0" width="1" height="1" fill="#6a6a58"/><rect x="402" y="0" width="1" height="2" fill="#000"/><rect x="401" y="1" width="1" height="1" fill="#000"/><rect x="408" y="-1" width="2" height="2" fill="#e6e2b2"/><rect x="409" y="0" width="1" height="1" fill="#6a6a58"/><rect x="410" y="0" width="1" height="2" fill="#000"/><rect x="409" y="1" width="1" height="1" fill="#000"/><rect x="416" y="-1" width="2" height="2" fill="#e6e2b2"/><rect x="417" y="0" width="1" height="1" fill="#6a6a58"/><rect x="418" y="0" width="1" height="2" fill="#000"/><rect x="417" y="1" width="1" height="1" fill="#000"/><rect x="424" y="-1" width="2" height="2" fill="#e6e2b2"/><rect x="425" y="0" width="1" height="1" fill="#6a6a58"/><rect x="426" y="0" width="1" height="2" fill="#000"/><rect x="425" y="1" width="1" height="1" fill="#000"/><rect x="432" y="-1" width="2" height="2" fill="#e6e2b2"/><rect x="433" y="0" width="1" height="1" fill="#6a6a58"/><rect x="434" y="0" width="1" height="2" fill="#000"/><rect x="433" y="1" width="1" height="1" fill="#000"/><rect x="440" y="-1" width="2" height="2" fill="#e6e2b2"/><rect x="441" y="0" width="1" height="1" fill="#6a6a58"/><rect x="442" y="0" width="1" height="2" fill="#000"/><rect x="441" y="1" width="1" height="1" fill="#000"/><rect x="448" y="-1" width="2" height="2" fill="#e6e2b2"/><rect x="449" y="0" width="1" height="1" fill="#6a6a58"/><rect x="450" y="0" width="1" height="2" fill="#000"/><rect x="449" y="1" width="1" height="1" fill="#000"/><rect x="456" y="-1" width="2" height="2" fill="#e6e2b2"/><rect x="457" y="0" width="1" height="1" fill="#6a6a58"/><rect x="458" y="0" width="1" height="2" fill="#000"/><rect x="457" y="1" width="1" height="1" fill="#000"/><rect x="464" y="-1" width="2" height="2" fill="#e6e2b2"/><rect x="465" y="0" width="1" height="1" fill="#6a6a58"/><rect x="466" y="0" width="1" height="2" fill="#000"/><rect x="465" y="1" width="1" height="1" fill="#000"/><rect x="472" y="-1" width="2" height="2" fill="#e6e2b2"/><rect x="473" y="0" width="1" height="1" fill="#6a6a58"/><rect x="474" y="0" width="1" height="2" fill="#000"/><rect x="473" y="1" width="1" height="1" fill="#000"/><rect x="480" y="-1" width="2" height="2" fill="#e6e2b2"/><rect x="481" y="0" width="1" height="1" fill="#6a6a58"/><rect x="482" y="0" width="1" height="2" fill="#000"/><rect x="481" y="1" width="1" height="1" fill="#000"/><rect x="4" y="3" width="2" height="2" fill="#e6e2b2"/><rect x="5" y="4" width="1" height="1" fill="#6a6a58"/><rect x="6" y="4" width="1" height="2" fill="#000"/><rect x="5" y="5" width="1" height="1" fill="#000"/><rect x="12" y="3" width="2" height="2" fill="#e6e2b2"/><rect x="13" y="4" width="1" height="1" fill="#6a6a58"/><rect x="14" y="4" width="1" height="2" fill="#000"/><rect x="13" y="5" width="1" height="1" fill="#000"/><rect x="20" y="3" width="2" height="2" fill="#e6e2b2"/><rect x="21" y="4" width="1" height="1" fill="#6a6a58"/><rect x="22" y="4" width="1" height="2" fill="#000"/><rect x="21" y="5" width="1" height="1" fill="#000"/><rect x="28" y="3" width="2" height="2" fill="#e6e2b2"/><rect x="29" y="4" width="1" height="1" fill="#6a6a58"/><rect x="30" y="4" width="1" height="2" fill="#000"/><rect x="29" y="5" width="1" height="1" fill="#000"/><rect x="36" y="3" width="2" height="2" fill="#e6e2b2"/><rect x="37" y="4" width="1" height="1" fill="#6a6a58"/><rect x="38" y="4" width="1" height="2" fill="#000"/><rect x="37" y="5" width="1" height="1" fill="#000"/><rect x="44" y="3" width="2" height="2" fill="#e6e2b2"/><rect x="45" y="4" width="1" height="1" fill="#6a6a58"/><rect x="46" y="4" width="1" height="2" fill="#000"/><rect x="45" y="5" width="1" height="1" fill="#000"/><rect x="52" y="3" width="2" height="2" fill="#e6e2b2"/><rect x="53" y="4" width="1" height="1" fill="#6a6a58"/><rect x="54" y="4" width="1" height="2" fill="#000"/><rect x="53" y="5" width="1" height="1" fill="#000"/><rect x="60" y="3" width="2" height="2" fill="#e6e2b2"/><rect x="61" y="4" width="1" height="1" fill="#6a6a58"/><rect x="62" y="4" width="1" height="2" fill="#000"/><rect x="61" y="5" width="1" height="1" fill="#000"/><rect x="68" y="3" width="2" height="2" fill="#e6e2b2"/><rect x="69" y="4" width="1" height="1" fill="#6a6a58"/><rect x="70" y="4" width="1" height="2" fill="#000"/><rect x="69" y="5" width="1" height="1" fill="#000"/><rect x="76" y="3" width="2" height="2" fill="#e6e2b2"/><rect x="77" y="4" width="1" height="1" fill="#6a6a58"/><rect x="78" y="4" width="1" height="2" fill="#000"/><rect x="77" y="5" width="1" height="1" fill="#000"/><rect x="84" y="3" width="2" height="2" fill="#e6e2b2"/><rect x="85" y="4" width="1" height="1" fill="#6a6a58"/><rect x="86" y="4" width="1" height="2" fill="#000"/><rect x="85" y="5" width="1" height="1" fill="#000"/><rect x="92" y="3" width="2" height="2" fill="#e6e2b2"/><rect x="93" y="4" width="1" height="1" fill="#6a6a58"/><rect x="94" y="4" width="1" height="2" fill="#000"/><rect x="93" y="5" width="1" height="1" fill="#000"/><rect x="100" y="3" width="2" height="2" fill="#e6e2b2"/><rect x="101" y="4" width="1" height="1" fill="#6a6a58"/><rect x="102" y="4" width="1" height="2" fill="#000"/><rect x="101" y="5" width="1" height="1" fill="#000"/><rect x="108" y="3" width="2" height="2" fill="#e6e2b2"/><rect x="109" y="4" width="1" height="1" fill="#6a6a58"/><rect x="110" y="4" width="1" height="2" fill="#000"/><rect x="109" y="5" width="1" height="1" fill="#000"/><rect x="116" y="3" width="2" height="2" fill="#e6e2b2"/><rect x="117" y="4" width="1" height="1" fill="#6a6a58"/><rect x="118" y="4" width="1" height="2" fill="#000"/><rect x="117" y="5" width="1" height="1" fill="#000"/><rect x="124" y="3" width="2" height="2" fill="#e6e2b2"/><rect x="125" y="4" width="1" height="1" fill="#6a6a58"/><rect x="126" y="4" width="1" height="2" fill="#000"/><rect x="125" y="5" width="1" height="1" fill="#000"/><rect x="132" y="3" width="2" height="2" fill="#e6e2b2"/><rect x="133" y="4" width="1" height="1" fill="#6a6a58"/><rect x="134" y="4" width="1" height="2" fill="#000"/><rect x="133" y="5" width="1" height="1" fill="#000"/><rect x="140" y="3" width="2" height="2" fill="#e6e2b2"/><rect x="141" y="4" width="1" height="1" fill="#6a6a58"/><rect x="142" y="4" width="1" height="2" fill="#000"/><rect x="141" y="5" width="1" height="1" fill="#000"/><rect x="148" y="3" width="2" height="2" fill="#e6e2b2"/><rect x="149" y="4" width="1" height="1" fill="#6a6a58"/><rect x="150" y="4" width="1" height="2" fill="#000"/><rect x="149" y="5" width="1" height="1" fill="#000"/><rect x="156" y="3" width="2" height="2" fill="#e6e2b2"/><rect x="157" y="4" width="1" height="1" fill="#6a6a58"/><rect x="158" y="4" width="1" height="2" fill="#000"/><rect x="157" y="5" width="1" height="1" fill="#000"/><rect x="164" y="3" width="2" height="2" fill="#e6e2b2"/><rect x="165" y="4" width="1" height="1" fill="#6a6a58"/><rect x="166" y="4" width="1" height="2" fill="#000"/><rect x="165" y="5" width="1" height="1" fill="#000"/><rect x="172" y="3" width="2" height="2" fill="#e6e2b2"/><rect x="173" y="4" width="1" height="1" fill="#6a6a58"/><rect x="174" y="4" width="1" height="2" fill="#000"/><rect x="173" y="5" width="1" height="1" fill="#000"/><rect x="180" y="3" width="2" height="2" fill="#e6e2b2"/><rect x="181" y="4" width="1" height="1" fill="#6a6a58"/><rect x="182" y="4" width="1" height="2" fill="#000"/><rect x="181" y="5" width="1" height="1" fill="#000"/><rect x="188" y="3" width="2" height="2" fill="#e6e2b2"/><rect x="189" y="4" width="1" height="1" fill="#6a6a58"/><rect x="190" y="4" width="1" height="2" fill="#000"/><rect x="189" y="5" width="1" height="1" fill="#000"/><rect x="196" y="3" width="2" height="2" fill="#e6e2b2"/><rect x="197" y="4" width="1" height="1" fill="#6a6a58"/><rect x="198" y="4" width="1" height="2" fill="#000"/><rect x="197" y="5" width="1" height="1" fill="#000"/><rect x="204" y="3" width="2" height="2" fill="#e6e2b2"/><rect x="205" y="4" width="1" height="1" fill="#6a6a58"/><rect x="206" y="4" width="1" height="2" fill="#000"/><rect x="205" y="5" width="1" height="1" fill="#000"/><rect x="212" y="3" width="2" height="2" fill="#e6e2b2"/><rect x="213" y="4" width="1" height="1" fill="#6a6a58"/><rect x="214" y="4" width="1" height="2" fill="#000"/><rect x="213" y="5" width="1" height="1" fill="#000"/><rect x="220" y="3" width="2" height="2" fill="#e6e2b2"/><rect x="221" y="4" width="1" height="1" fill="#6a6a58"/><rect x="222" y="4" width="1" height="2" fill="#000"/><rect x="221" y="5" width="1" height="1" fill="#000"/><rect x="228" y="3" width="2" height="2" fill="#e6e2b2"/><rect x="229" y="4" width="1" height="1" fill="#6a6a58"/><rect x="230" y="4" width="1" height="2" fill="#000"/><rect x="229" y="5" width="1" height="1" fill="#000"/><rect x="236" y="3" width="2" height="2" fill="#e6e2b2"/><rect x="237" y="4" width="1" height="1" fill="#6a6a58"/><rect x="238" y="4" width="1" height="2" fill="#000"/><rect x="237" y="5" width="1" height="1" fill="#000"/><rect x="244" y="3" width="2" height="2" fill="#e6e2b2"/><rect x="245" y="4" width="1" height="1" fill="#6a6a58"/><rect x="246" y="4" width="1" height="2" fill="#000"/><rect x="245" y="5" width="1" height="1" fill="#000"/><rect x="252" y="3" width="2" height="2" fill="#e6e2b2"/><rect x="253" y="4" width="1" height="1" fill="#6a6a58"/><rect x="254" y="4" width="1" height="2" fill="#000"/><rect x="253" y="5" width="1" height="1" fill="#000"/><rect x="260" y="3" width="2" height="2" fill="#e6e2b2"/><rect x="261" y="4" width="1" height="1" fill="#6a6a58"/><rect x="262" y="4" width="1" height="2" fill="#000"/><rect x="261" y="5" width="1" height="1" fill="#000"/><rect x="268" y="3" width="2" height="2" fill="#e6e2b2"/><rect x="269" y="4" width="1" height="1" fill="#6a6a58"/><rect x="270" y="4" width="1" height="2" fill="#000"/><rect x="269" y="5" width="1" height="1" fill="#000"/><rect x="276" y="3" width="2" height="2" fill="#e6e2b2"/><rect x="277" y="4" width="1" height="1" fill="#6a6a58"/><rect x="278" y="4" width="1" height="2" fill="#000"/><rect x="277" y="5" width="1" height="1" fill="#000"/><rect x="284" y="3" width="2" height="2" fill="#e6e2b2"/><rect x="285" y="4" width="1" height="1" fill="#6a6a58"/><rect x="286" y="4" width="1" height="2" fill="#000"/><rect x="285" y="5" width="1" height="1" fill="#000"/><rect x="292" y="3" width="2" height="2" fill="#e6e2b2"/><rect x="293" y="4" width="1" height="1" fill="#6a6a58"/><rect x="294" y="4" width="1" height="2" fill="#000"/><rect x="293" y="5" width="1" height="1" fill="#000"/><rect x="300" y="3" width="2" height="2" fill="#e6e2b2"/><rect x="301" y="4" width="1" height="1" fill="#6a6a58"/><rect x="302" y="4" width="1" height="2" fill="#000"/><rect x="301" y="5" width="1" height="1" fill="#000"/><rect x="308" y="3" width="2" height="2" fill="#e6e2b2"/><rect x="309" y="4" width="1" height="1" fill="#6a6a58"/><rect x="310" y="4" width="1" height="2" fill="#000"/><rect x="309" y="5" width="1" height="1" fill="#000"/><rect x="316" y="3" width="2" height="2" fill="#e6e2b2"/><rect x="317" y="4" width="1" height="1" fill="#6a6a58"/><rect x="318" y="4" width="1" height="2" fill="#000"/><rect x="317" y="5" width="1" height="1" fill="#000"/><rect x="324" y="3" width="2" height="2" fill="#e6e2b2"/><rect x="325" y="4" width="1" height="1" fill="#6a6a58"/><rect x="326" y="4" width="1" height="2" fill="#000"/><rect x="325" y="5" width="1" height="1" fill="#000"/><rect x="332" y="3" width="2" height="2" fill="#e6e2b2"/><rect x="333" y="4" width="1" height="1" fill="#6a6a58"/><rect x="334" y="4" width="1" height="2" fill="#000"/><rect x="333" y="5" width="1" height="1" fill="#000"/><rect x="340" y="3" width="2" height="2" fill="#e6e2b2"/><rect x="341" y="4" width="1" height="1" fill="#6a6a58"/><rect x="342" y="4" width="1" height="2" fill="#000"/><rect x="341" y="5" width="1" height="1" fill="#000"/><rect x="348" y="3" width="2" height="2" fill="#e6e2b2"/><rect x="349" y="4" width="1" height="1" fill="#6a6a58"/><rect x="350" y="4" width="1" height="2" fill="#000"/><rect x="349" y="5" width="1" height="1" fill="#000"/><rect x="356" y="3" width="2" height="2" fill="#e6e2b2"/><rect x="357" y="4" width="1" height="1" fill="#6a6a58"/><rect x="358" y="4" width="1" height="2" fill="#000"/><rect x="357" y="5" width="1" height="1" fill="#000"/><rect x="364" y="3" width="2" height="2" fill="#e6e2b2"/><rect x="365" y="4" width="1" height="1" fill="#6a6a58"/><rect x="366" y="4" width="1" height="2" fill="#000"/><rect x="365" y="5" width="1" height="1" fill="#000"/><rect x="372" y="3" width="2" height="2" fill="#e6e2b2"/><rect x="373" y="4" width="1" height="1" fill="#6a6a58"/><rect x="374" y="4" width="1" height="2" fill="#000"/><rect x="373" y="5" width="1" height="1" fill="#000"/><rect x="380" y="3" width="2" height="2" fill="#e6e2b2"/><rect x="381" y="4" width="1" height="1" fill="#6a6a58"/><rect x="382" y="4" width="1" height="2" fill="#000"/><rect x="381" y="5" width="1" height="1" fill="#000"/><rect x="388" y="3" width="2" height="2" fill="#e6e2b2"/><rect x="389" y="4" width="1" height="1" fill="#6a6a58"/><rect x="390" y="4" width="1" height="2" fill="#000"/><rect x="389" y="5" width="1" height="1" fill="#000"/><rect x="396" y="3" width="2" height="2" fill="#e6e2b2"/><rect x="397" y="4" width="1" height="1" fill="#6a6a58"/><rect x="398" y="4" width="1" height="2" fill="#000"/><rect x="397" y="5" width="1" height="1" fill="#000"/><rect x="404" y="3" width="2" height="2" fill="#e6e2b2"/><rect x="405" y="4" width="1" height="1" fill="#6a6a58"/><rect x="406" y="4" width="1" height="2" fill="#000"/><rect x="405" y="5" width="1" height="1" fill="#000"/><rect x="412" y="3" width="2" height="2" fill="#e6e2b2"/><rect x="413" y="4" width="1" height="1" fill="#6a6a58"/><rect x="414" y="4" width="1" height="2" fill="#000"/><rect x="413" y="5" width="1" height="1" fill="#000"/><rect x="420" y="3" width="2" height="2" fill="#e6e2b2"/><rect x="421" y="4" width="1" height="1" fill="#6a6a58"/><rect x="422" y="4" width="1" height="2" fill="#000"/><rect x="421" y="5" width="1" height="1" fill="#000"/><rect x="428" y="3" width="2" height="2" fill="#e6e2b2"/><rect x="429" y="4" width="1" height="1" fill="#6a6a58"/><rect x="430" y="4" width="1" height="2" fill="#000"/><rect x="429" y="5" width="1" height="1" fill="#000"/><rect x="436" y="3" width="2" height="2" fill="#e6e2b2"/><rect x="437" y="4" width="1" height="1" fill="#6a6a58"/><rect x="438" y="4" width="1" height="2" fill="#000"/><rect x="437" y="5" width="1" height="1" fill="#000"/><rect x="444" y="3" width="2" height="2" fill="#e6e2b2"/><rect x="445" y="4" width="1" height="1" fill="#6a6a58"/><rect x="446" y="4" width="1" height="2" fill="#000"/><rect x="445" y="5" width="1" height="1" fill="#000"/><rect x="452" y="3" width="2" height="2" fill="#e6e2b2"/><rect x="453" y="4" width="1" height="1" fill="#6a6a58"/><rect x="454" y="4" width="1" height="2" fill="#000"/><rect x="453" y="5" width="1" height="1" fill="#000"/><rect x="460" y="3" width="2" height="2" fill="#e6e2b2"/><rect x="461" y="4" width="1" height="1" fill="#6a6a58"/><rect x="462" y="4" width="1" height="2" fill="#000"/><rect x="461" y="5" width="1" height="1" fill="#000"/><rect x="468" y="3" width="2" height="2" fill="#e6e2b2"/><rect x="469" y="4" width="1" height="1" fill="#6a6a58"/><rect x="470" y="4" width="1" height="2" fill="#000"/><rect x="469" y="5" width="1" height="1" fill="#000"/><rect x="476" y="3" width="2" height="2" fill="#e6e2b2"/><rect x="477" y="4" width="1" height="1" fill="#6a6a58"/><rect x="478" y="4" width="1" height="2" fill="#000"/><rect x="477" y="5" width="1" height="1" fill="#000"/><rect x="0" y="7" width="2" height="2" fill="#e6e2b2"/><rect x="1" y="8" width="1" height="1" fill="#6a6a58"/><rect x="2" y="8" width="1" height="2" fill="#000"/><rect x="1" y="9" width="1" height="1" fill="#000"/><rect x="8" y="7" width="2" height="2" fill="#e6e2b2"/><rect x="9" y="8" width="1" height="1" fill="#6a6a58"/><rect x="10" y="8" width="1" height="2" fill="#000"/><rect x="9" y="9" width="1" height="1" fill="#000"/><rect x="16" y="7" width="2" height="2" fill="#e6e2b2"/><rect x="17" y="8" width="1" height="1" fill="#6a6a58"/><rect x="18" y="8" width="1" height="2" fill="#000"/><rect x="17" y="9" width="1" height="1" fill="#000"/><rect x="24" y="7" width="2" height="2" fill="#e6e2b2"/><rect x="25" y="8" width="1" height="1" fill="#6a6a58"/><rect x="26" y="8" width="1" height="2" fill="#000"/><rect x="25" y="9" width="1" height="1" fill="#000"/><rect x="32" y="7" width="2" height="2" fill="#e6e2b2"/><rect x="33" y="8" width="1" height="1" fill="#6a6a58"/><rect x="34" y="8" width="1" height="2" fill="#000"/><rect x="33" y="9" width="1" height="1" fill="#000"/><rect x="40" y="7" width="2" height="2" fill="#e6e2b2"/><rect x="41" y="8" width="1" height="1" fill="#6a6a58"/><rect x="42" y="8" width="1" height="2" fill="#000"/><rect x="41" y="9" width="1" height="1" fill="#000"/><rect x="48" y="7" width="2" height="2" fill="#e6e2b2"/><rect x="49" y="8" width="1" height="1" fill="#6a6a58"/><rect x="50" y="8" width="1" height="2" fill="#000"/><rect x="49" y="9" width="1" height="1" fill="#000"/><rect x="56" y="7" width="2" height="2" fill="#e6e2b2"/><rect x="57" y="8" width="1" height="1" fill="#6a6a58"/><rect x="58" y="8" width="1" height="2" fill="#000"/><rect x="57" y="9" width="1" height="1" fill="#000"/><rect x="64" y="7" width="2" height="2" fill="#e6e2b2"/><rect x="65" y="8" width="1" height="1" fill="#6a6a58"/><rect x="66" y="8" width="1" height="2" fill="#000"/><rect x="65" y="9" width="1" height="1" fill="#000"/><rect x="72" y="7" width="2" height="2" fill="#e6e2b2"/><rect x="73" y="8" width="1" height="1" fill="#6a6a58"/><rect x="74" y="8" width="1" height="2" fill="#000"/><rect x="73" y="9" width="1" height="1" fill="#000"/><rect x="80" y="7" width="2" height="2" fill="#e6e2b2"/><rect x="81" y="8" width="1" height="1" fill="#6a6a58"/><rect x="82" y="8" width="1" height="2" fill="#000"/><rect x="81" y="9" width="1" height="1" fill="#000"/><rect x="88" y="7" width="2" height="2" fill="#e6e2b2"/><rect x="89" y="8" width="1" height="1" fill="#6a6a58"/><rect x="90" y="8" width="1" height="2" fill="#000"/><rect x="89" y="9" width="1" height="1" fill="#000"/><rect x="96" y="7" width="2" height="2" fill="#e6e2b2"/><rect x="97" y="8" width="1" height="1" fill="#6a6a58"/><rect x="98" y="8" width="1" height="2" fill="#000"/><rect x="97" y="9" width="1" height="1" fill="#000"/><rect x="104" y="7" width="2" height="2" fill="#e6e2b2"/><rect x="105" y="8" width="1" height="1" fill="#6a6a58"/><rect x="106" y="8" width="1" height="2" fill="#000"/><rect x="105" y="9" width="1" height="1" fill="#000"/><rect x="112" y="7" width="2" height="2" fill="#e6e2b2"/><rect x="113" y="8" width="1" height="1" fill="#6a6a58"/><rect x="114" y="8" width="1" height="2" fill="#000"/><rect x="113" y="9" width="1" height="1" fill="#000"/><rect x="120" y="7" width="2" height="2" fill="#e6e2b2"/><rect x="121" y="8" width="1" height="1" fill="#6a6a58"/><rect x="122" y="8" width="1" height="2" fill="#000"/><rect x="121" y="9" width="1" height="1" fill="#000"/><rect x="128" y="7" width="2" height="2" fill="#e6e2b2"/><rect x="129" y="8" width="1" height="1" fill="#6a6a58"/><rect x="130" y="8" width="1" height="2" fill="#000"/><rect x="129" y="9" width="1" height="1" fill="#000"/><rect x="136" y="7" width="2" height="2" fill="#e6e2b2"/><rect x="137" y="8" width="1" height="1" fill="#6a6a58"/><rect x="138" y="8" width="1" height="2" fill="#000"/><rect x="137" y="9" width="1" height="1" fill="#000"/><rect x="144" y="7" width="2" height="2" fill="#e6e2b2"/><rect x="145" y="8" width="1" height="1" fill="#6a6a58"/><rect x="146" y="8" width="1" height="2" fill="#000"/><rect x="145" y="9" width="1" height="1" fill="#000"/><rect x="152" y="7" width="2" height="2" fill="#e6e2b2"/><rect x="153" y="8" width="1" height="1" fill="#6a6a58"/><rect x="154" y="8" width="1" height="2" fill="#000"/><rect x="153" y="9" width="1" height="1" fill="#000"/><rect x="160" y="7" width="2" height="2" fill="#e6e2b2"/><rect x="161" y="8" width="1" height="1" fill="#6a6a58"/><rect x="162" y="8" width="1" height="2" fill="#000"/><rect x="161" y="9" width="1" height="1" fill="#000"/><rect x="168" y="7" width="2" height="2" fill="#e6e2b2"/><rect x="169" y="8" width="1" height="1" fill="#6a6a58"/><rect x="170" y="8" width="1" height="2" fill="#000"/><rect x="169" y="9" width="1" height="1" fill="#000"/><rect x="176" y="7" width="2" height="2" fill="#e6e2b2"/><rect x="177" y="8" width="1" height="1" fill="#6a6a58"/><rect x="178" y="8" width="1" height="2" fill="#000"/><rect x="177" y="9" width="1" height="1" fill="#000"/><rect x="184" y="7" width="2" height="2" fill="#e6e2b2"/><rect x="185" y="8" width="1" height="1" fill="#6a6a58"/><rect x="186" y="8" width="1" height="2" fill="#000"/><rect x="185" y="9" width="1" height="1" fill="#000"/><rect x="192" y="7" width="2" height="2" fill="#e6e2b2"/><rect x="193" y="8" width="1" height="1" fill="#6a6a58"/><rect x="194" y="8" width="1" height="2" fill="#000"/><rect x="193" y="9" width="1" height="1" fill="#000"/><rect x="200" y="7" width="2" height="2" fill="#e6e2b2"/><rect x="201" y="8" width="1" height="1" fill="#6a6a58"/><rect x="202" y="8" width="1" height="2" fill="#000"/><rect x="201" y="9" width="1" height="1" fill="#000"/><rect x="208" y="7" width="2" height="2" fill="#e6e2b2"/><rect x="209" y="8" width="1" height="1" fill="#6a6a58"/><rect x="210" y="8" width="1" height="2" fill="#000"/><rect x="209" y="9" width="1" height="1" fill="#000"/><rect x="216" y="7" width="2" height="2" fill="#e6e2b2"/><rect x="217" y="8" width="1" height="1" fill="#6a6a58"/><rect x="218" y="8" width="1" height="2" fill="#000"/><rect x="217" y="9" width="1" height="1" fill="#000"/><rect x="224" y="7" width="2" height="2" fill="#e6e2b2"/><rect x="225" y="8" width="1" height="1" fill="#6a6a58"/><rect x="226" y="8" width="1" height="2" fill="#000"/><rect x="225" y="9" width="1" height="1" fill="#000"/><rect x="232" y="7" width="2" height="2" fill="#e6e2b2"/><rect x="233" y="8" width="1" height="1" fill="#6a6a58"/><rect x="234" y="8" width="1" height="2" fill="#000"/><rect x="233" y="9" width="1" height="1" fill="#000"/><rect x="240" y="7" width="2" height="2" fill="#e6e2b2"/><rect x="241" y="8" width="1" height="1" fill="#6a6a58"/><rect x="242" y="8" width="1" height="2" fill="#000"/><rect x="241" y="9" width="1" height="1" fill="#000"/><rect x="248" y="7" width="2" height="2" fill="#e6e2b2"/><rect x="249" y="8" width="1" height="1" fill="#6a6a58"/><rect x="250" y="8" width="1" height="2" fill="#000"/><rect x="249" y="9" width="1" height="1" fill="#000"/><rect x="256" y="7" width="2" height="2" fill="#e6e2b2"/><rect x="257" y="8" width="1" height="1" fill="#6a6a58"/><rect x="258" y="8" width="1" height="2" fill="#000"/><rect x="257" y="9" width="1" height="1" fill="#000"/><rect x="264" y="7" width="2" height="2" fill="#e6e2b2"/><rect x="265" y="8" width="1" height="1" fill="#6a6a58"/><rect x="266" y="8" width="1" height="2" fill="#000"/><rect x="265" y="9" width="1" height="1" fill="#000"/><rect x="272" y="7" width="2" height="2" fill="#e6e2b2"/><rect x="273" y="8" width="1" height="1" fill="#6a6a58"/><rect x="274" y="8" width="1" height="2" fill="#000"/><rect x="273" y="9" width="1" height="1" fill="#000"/><rect x="280" y="7" width="2" height="2" fill="#e6e2b2"/><rect x="281" y="8" width="1" height="1" fill="#6a6a58"/><rect x="282" y="8" width="1" height="2" fill="#000"/><rect x="281" y="9" width="1" height="1" fill="#000"/><rect x="288" y="7" width="2" height="2" fill="#e6e2b2"/><rect x="289" y="8" width="1" height="1" fill="#6a6a58"/><rect x="290" y="8" width="1" height="2" fill="#000"/><rect x="289" y="9" width="1" height="1" fill="#000"/><rect x="296" y="7" width="2" height="2" fill="#e6e2b2"/><rect x="297" y="8" width="1" height="1" fill="#6a6a58"/><rect x="298" y="8" width="1" height="2" fill="#000"/><rect x="297" y="9" width="1" height="1" fill="#000"/><rect x="304" y="7" width="2" height="2" fill="#e6e2b2"/><rect x="305" y="8" width="1" height="1" fill="#6a6a58"/><rect x="306" y="8" width="1" height="2" fill="#000"/><rect x="305" y="9" width="1" height="1" fill="#000"/><rect x="312" y="7" width="2" height="2" fill="#e6e2b2"/><rect x="313" y="8" width="1" height="1" fill="#6a6a58"/><rect x="314" y="8" width="1" height="2" fill="#000"/><rect x="313" y="9" width="1" height="1" fill="#000"/><rect x="320" y="7" width="2" height="2" fill="#e6e2b2"/><rect x="321" y="8" width="1" height="1" fill="#6a6a58"/><rect x="322" y="8" width="1" height="2" fill="#000"/><rect x="321" y="9" width="1" height="1" fill="#000"/><rect x="328" y="7" width="2" height="2" fill="#e6e2b2"/><rect x="329" y="8" width="1" height="1" fill="#6a6a58"/><rect x="330" y="8" width="1" height="2" fill="#000"/><rect x="329" y="9" width="1" height="1" fill="#000"/><rect x="336" y="7" width="2" height="2" fill="#e6e2b2"/><rect x="337" y="8" width="1" height="1" fill="#6a6a58"/><rect x="338" y="8" width="1" height="2" fill="#000"/><rect x="337" y="9" width="1" height="1" fill="#000"/><rect x="344" y="7" width="2" height="2" fill="#e6e2b2"/><rect x="345" y="8" width="1" height="1" fill="#6a6a58"/><rect x="346" y="8" width="1" height="2" fill="#000"/><rect x="345" y="9" width="1" height="1" fill="#000"/><rect x="352" y="7" width="2" height="2" fill="#e6e2b2"/><rect x="353" y="8" width="1" height="1" fill="#6a6a58"/><rect x="354" y="8" width="1" height="2" fill="#000"/><rect x="353" y="9" width="1" height="1" fill="#000"/><rect x="360" y="7" width="2" height="2" fill="#e6e2b2"/><rect x="361" y="8" width="1" height="1" fill="#6a6a58"/><rect x="362" y="8" width="1" height="2" fill="#000"/><rect x="361" y="9" width="1" height="1" fill="#000"/><rect x="368" y="7" width="2" height="2" fill="#e6e2b2"/><rect x="369" y="8" width="1" height="1" fill="#6a6a58"/><rect x="370" y="8" width="1" height="2" fill="#000"/><rect x="369" y="9" width="1" height="1" fill="#000"/><rect x="376" y="7" width="2" height="2" fill="#e6e2b2"/><rect x="377" y="8" width="1" height="1" fill="#6a6a58"/><rect x="378" y="8" width="1" height="2" fill="#000"/><rect x="377" y="9" width="1" height="1" fill="#000"/><rect x="384" y="7" width="2" height="2" fill="#e6e2b2"/><rect x="385" y="8" width="1" height="1" fill="#6a6a58"/><rect x="386" y="8" width="1" height="2" fill="#000"/><rect x="385" y="9" width="1" height="1" fill="#000"/><rect x="392" y="7" width="2" height="2" fill="#e6e2b2"/><rect x="393" y="8" width="1" height="1" fill="#6a6a58"/><rect x="394" y="8" width="1" height="2" fill="#000"/><rect x="393" y="9" width="1" height="1" fill="#000"/><rect x="400" y="7" width="2" height="2" fill="#e6e2b2"/><rect x="401" y="8" width="1" height="1" fill="#6a6a58"/><rect x="402" y="8" width="1" height="2" fill="#000"/><rect x="401" y="9" width="1" height="1" fill="#000"/><rect x="408" y="7" width="2" height="2" fill="#e6e2b2"/><rect x="409" y="8" width="1" height="1" fill="#6a6a58"/><rect x="410" y="8" width="1" height="2" fill="#000"/><rect x="409" y="9" width="1" height="1" fill="#000"/><rect x="416" y="7" width="2" height="2" fill="#e6e2b2"/><rect x="417" y="8" width="1" height="1" fill="#6a6a58"/><rect x="418" y="8" width="1" height="2" fill="#000"/><rect x="417" y="9" width="1" height="1" fill="#000"/><rect x="424" y="7" width="2" height="2" fill="#e6e2b2"/><rect x="425" y="8" width="1" height="1" fill="#6a6a58"/><rect x="426" y="8" width="1" height="2" fill="#000"/><rect x="425" y="9" width="1" height="1" fill="#000"/><rect x="432" y="7" width="2" height="2" fill="#e6e2b2"/><rect x="433" y="8" width="1" height="1" fill="#6a6a58"/><rect x="434" y="8" width="1" height="2" fill="#000"/><rect x="433" y="9" width="1" height="1" fill="#000"/><rect x="440" y="7" width="2" height="2" fill="#e6e2b2"/><rect x="441" y="8" width="1" height="1" fill="#6a6a58"/><rect x="442" y="8" width="1" height="2" fill="#000"/><rect x="441" y="9" width="1" height="1" fill="#000"/><rect x="448" y="7" width="2" height="2" fill="#e6e2b2"/><rect x="449" y="8" width="1" height="1" fill="#6a6a58"/><rect x="450" y="8" width="1" height="2" fill="#000"/><rect x="449" y="9" width="1" height="1" fill="#000"/><rect x="456" y="7" width="2" height="2" fill="#e6e2b2"/><rect x="457" y="8" width="1" height="1" fill="#6a6a58"/><rect x="458" y="8" width="1" height="2" fill="#000"/><rect x="457" y="9" width="1" height="1" fill="#000"/><rect x="464" y="7" width="2" height="2" fill="#e6e2b2"/><rect x="465" y="8" width="1" height="1" fill="#6a6a58"/><rect x="466" y="8" width="1" height="2" fill="#000"/><rect x="465" y="9" width="1" height="1" fill="#000"/><rect x="472" y="7" width="2" height="2" fill="#e6e2b2"/><rect x="473" y="8" width="1" height="1" fill="#6a6a58"/><rect x="474" y="8" width="1" height="2" fill="#000"/><rect x="473" y="9" width="1" height="1" fill="#000"/><rect x="480" y="7" width="2" height="2" fill="#e6e2b2"/><rect x="481" y="8" width="1" height="1" fill="#6a6a58"/><rect x="482" y="8" width="1" height="2" fill="#000"/><rect x="481" y="9" width="1" height="1" fill="#000"/></svg>
<svg style="position:absolute;left:140px;top:156px" width="24" height="24" viewBox="0 0 24 24" shape-rendering="crispEdges"><circle cx="8.8" cy="9.6" r="5.8" fill="#000070" shape-rendering="geometricPrecision"/><ellipse cx="10.2" cy="7.2" rx="4.6" ry="3.2" fill="#1818e0" shape-rendering="geometricPrecision"/><rect x="4" y="5" width="1" height="1" fill="#c8b8ff"/><rect x="6" y="4" width="2" height="1" fill="#c8b8ff"/><rect x="8" y="6" width="1" height="1" fill="#b0a0ff"/><rect x="11" y="4" width="1" height="1" fill="#d0c8ff"/><rect x="13" y="5" width="1" height="1" fill="#9090ff"/><path d="M6.8 5 L4.5 11.5" stroke="#5aa870" stroke-width="1.8" shape-rendering="geometricPrecision"/><rect x="6.6" y="8.4" width="12" height="11.2" fill="#fff" stroke="#000" stroke-width="1.2"/><path d="M12 9.8 L14.2 9.8 L11.2 13.8 L13.4 13.8 L8.2 19.6 L9.2 15.6 L7 15.6 Z" fill="#ffff20" stroke="#00007a" stroke-width="0.9" stroke-linejoin="round" shape-rendering="geometricPrecision"/><rect x="14" y="10" width="3" height="2" fill="#0000d8"/><rect x="13" y="13" width="4" height="1" fill="#ff2020"/><rect x="13" y="15" width="3" height="1" fill="#ff2020"/><rect x="12" y="17" width="3" height="1" fill="#ff2020"/><rect x="15" y="16" width="3" height="3" fill="#0000d8"/><rect x="17" y="18" width="1" height="1" fill="#fff"/></svg>
<div class="t" style="left:161px;top:162px;font-size:13px;line-height:13px;color:#f2f6e8;transform:scaleX(0.976);transform-origin:0 0">Zusammenstellung</div>
<svg style="position:absolute;left:770px;top:163px" width="43" height="11" viewBox="0 0 43 11" shape-rendering="crispEdges"><g stroke="#f2f2e6" stroke-width="1.7" fill="none" shape-rendering="geometricPrecision"><path d="M0 9.5 H9 M9.5 0.5 L3.5 6.5 M3.5 2.5 V6.5 H7.5"/><path d="M16 0.5 H26 V10.5 M16.5 10 L22 4.5 M18.5 4.5 H22 V8"/><path d="M32.5 0.5 L41.5 9.5 M41.5 0.5 L32.5 9.5"/></g></svg>
<div style="position:absolute;left:149px;top:188px;width:658px;height:104px;border:1px solid #fbfbea"></div>
<div style="position:absolute;left:148px;top:187px;width:658px;height:104px;border:1px solid #d0d0aa"></div>
<div style="position:absolute;left:164px;top:186px;width:213px;height:4px;background:#d9d9d9"></div>
<div style="position:absolute;left:149px;top:291px;width:658px;height:358px;border:1px solid #fbfbea"></div>
<div style="position:absolute;left:148px;top:290px;width:658px;height:358px;border:1px solid #d0d0aa"></div>
<div style="position:absolute;left:164px;top:289px;width:188px;height:4px;background:#d9d9d9"></div>
<div class="t" style="left:171px;top:184px;font-size:12px;line-height:12px;font-weight:bold;color:#000;transform:scaleY(0.9);transform-origin:0 1px;">Zusammenstellung des Loses</div>
<div class="t" style="left:171px;top:288px;font-size:12px;line-height:12px;font-weight:bold;color:#000;transform:scaleY(0.9);transform-origin:0 1px;letter-spacing:-0.2px">Geräte im Los</div>
<div class="t" style="left:163px;top:210px;font-size:14px;line-height:14px;font-weight:normal;color:#000;transform:scaleX(0.935);transform-origin:0 0;">Ablesegebiet</div>
<div class="t" style="left:163px;top:231px;font-size:14px;line-height:14px;font-weight:normal;color:#000;transform:scaleX(0.935);transform-origin:0 0;">Ort</div>
<div class="t" style="left:163px;top:252px;font-size:14px;line-height:14px;font-weight:normal;color:#000;transform:scaleX(0.935);transform-origin:0 0;">Strasse</div>
<div style="position:absolute;left:249px;top:207px;width:192px;height:20px;background:#fff;border:1px solid #cdcea6;border-radius:3px"></div>
<div style="position:absolute;left:250px;top:208px;width:190px;height:18px;border-top:1px solid #6e6e6e;border-left:1px solid #6e6e6e;border-right:1px solid #f6f6e4;border-bottom:1px solid #f6f6e4;border-radius:2px"></div>
<div style="position:absolute;left:249px;top:228px;width:192px;height:20px;background:#fff;border:1px solid #cdcea6;border-radius:3px"></div>
<div style="position:absolute;left:250px;top:229px;width:190px;height:18px;border-top:1px solid #6e6e6e;border-left:1px solid #6e6e6e;border-right:1px solid #f6f6e4;border-bottom:1px solid #f6f6e4;border-radius:2px"></div>
<div style="position:absolute;left:249px;top:249px;width:192px;height:20px;background:#fff;border:1px solid #cdcea6;border-radius:3px"></div>
<div style="position:absolute;left:250px;top:250px;width:190px;height:18px;border-top:1px solid #6e6e6e;border-left:1px solid #6e6e6e;border-right:1px solid #f6f6e4;border-bottom:1px solid #f6f6e4;border-radius:2px"></div>
<div class="t" style="left:499px;top:210px;font-size:14px;line-height:14px;font-weight:normal;color:#000;transform:scaleX(0.935);transform-origin:0 0;">anderes Los</div>
<div class="t" style="left:498px;top:231px;font-size:14px;line-height:14px;font-weight:normal;color:#000;transform:scaleX(0.935);transform-origin:0 0;">Eigentümer</div>
<div style="position:absolute;left:585px;top:207px;width:192px;height:20px;background:#fff;border:1px solid #cdcea6;border-radius:3px"></div>
<div style="position:absolute;left:586px;top:208px;width:190px;height:18px;border-top:1px solid #6e6e6e;border-left:1px solid #6e6e6e;border-right:1px solid #f6f6e4;border-bottom:1px solid #f6f6e4;border-radius:2px"></div>
<div style="position:absolute;left:585px;top:228px;width:192px;height:20px;background:#fff;border:1px solid #cdcea6;border-radius:3px"></div>
<div style="position:absolute;left:586px;top:229px;width:190px;height:18px;border-top:1px solid #6e6e6e;border-left:1px solid #6e6e6e;border-right:1px solid #f6f6e4;border-bottom:1px solid #f6f6e4;border-radius:2px"></div>
<div style="position:absolute;left:586px;top:254px;width:191px;height:19px;border-top:1px solid #707070;border-left:1px solid #707070;border-right:1px solid #d8d8b4;border-bottom:1px solid #d8d8b4;border-radius:3px"></div>
<div class="t" style="left:631px;top:259px;font-size:12px;line-height:12px;font-weight:bold;color:#a09a68;transform:scaleY(0.9);transform-origin:0 1px;text-shadow:1px 1px 0 #f2f2e6">zusammenstellen</div>
<div class="t" style="left:164px;top:307px;font-size:14px;line-height:14px;font-weight:normal;color:#000;transform:scaleX(0.935);transform-origin:0 0;">Lfd.Nr.</div>
<div class="t" style="left:208px;top:307px;font-size:14px;line-height:14px;font-weight:normal;color:#000;transform:scaleX(0.92);transform-origin:0 0;">Gerätenummer</div>
<div class="t" style="left:409px;top:307px;font-size:14px;line-height:14px;font-weight:normal;color:#000;transform:scaleX(0.935);transform-origin:0 0;">Typ (Artikel)</div>
<div class="t" style="left:628px;top:307px;font-size:14px;line-height:14px;font-weight:normal;color:#000;transform:scaleX(0.935);transform-origin:0 0;">Fkt.</div>
<div class="t" style="left:668px;top:307px;font-size:14px;line-height:14px;font-weight:normal;color:#000;transform:scaleX(0.935);transform-origin:0 0;">Eichjahr</div>
<div class="t" style="left:720px;top:307px;font-size:14px;line-height:14px;font-weight:normal;color:#000;transform:scaleX(0.935);transform-origin:0 0;">Eichfrist</div>
<div style="position:absolute;left:164px;top:322px;width:43px;height:21px;background:#fff;border:1px solid #cdcea6;border-radius:3px"></div>
<div style="position:absolute;left:165px;top:323px;width:41px;height:19px;border-top:1px solid #6e6e6e;border-left:1px solid #6e6e6e;border-right:1px solid #f6f6e4;border-bottom:1px solid #f6f6e4;border-radius:2px"></div>
<div style="position:absolute;left:208px;top:322px;width:38px;height:21px;background:#fff;border:1px solid #cdcea6;border-radius:3px"></div>
<div style="position:absolute;left:209px;top:323px;width:36px;height:19px;border-top:1px solid #6e6e6e;border-left:1px solid #6e6e6e;border-right:1px solid #f6f6e4;border-bottom:1px solid #f6f6e4;border-radius:2px"></div>
<div style="position:absolute;left:246px;top:322px;width:163px;height:21px;background:#fff;border:1px solid #cdcea6;border-radius:3px"></div>
<div style="position:absolute;left:247px;top:323px;width:161px;height:19px;border-top:1px solid #6e6e6e;border-left:1px solid #6e6e6e;border-right:1px solid #f6f6e4;border-bottom:1px solid #f6f6e4;border-radius:2px"></div>
<div style="position:absolute;left:409px;top:322px;width:221px;height:21px;background:#fff;border:1px solid #cdcea6;border-radius:3px"></div>
<div style="position:absolute;left:410px;top:323px;width:219px;height:19px;border-top:1px solid #6e6e6e;border-left:1px solid #6e6e6e;border-right:1px solid #f6f6e4;border-bottom:1px solid #f6f6e4;border-radius:2px"></div>
<div style="position:absolute;left:630px;top:322px;width:38px;height:21px;background:#fff;border:1px solid #cdcea6;border-radius:3px"></div>
<div style="position:absolute;left:631px;top:323px;width:36px;height:19px;border-top:1px solid #6e6e6e;border-left:1px solid #6e6e6e;border-right:1px solid #f6f6e4;border-bottom:1px solid #f6f6e4;border-radius:2px"></div>
<div style="position:absolute;left:668px;top:322px;width:52px;height:21px;background:#fff;border:1px solid #cdcea6;border-radius:3px"></div>
<div style="position:absolute;left:669px;top:323px;width:50px;height:19px;border-top:1px solid #6e6e6e;border-left:1px solid #6e6e6e;border-right:1px solid #f6f6e4;border-bottom:1px solid #f6f6e4;border-radius:2px"></div>
<div style="position:absolute;left:720px;top:322px;width:57px;height:21px;background:#fff;border:1px solid #cdcea6;border-radius:3px"></div>
<div style="position:absolute;left:721px;top:323px;width:55px;height:19px;border-top:1px solid #6e6e6e;border-left:1px solid #6e6e6e;border-right:1px solid #f6f6e4;border-bottom:1px solid #f6f6e4;border-radius:2px"></div>
<div class="t" style="left:5px;width:200px;top:326px;font-size:14px;line-height:14px;color:#000;text-align:right;transform:scaleX(0.935);transform-origin:100% 0;">1</div>
<div class="t" style="left:211px;top:326px;font-size:14px;line-height:14px;font-weight:normal;color:#000;transform:scaleX(0.935);transform-origin:0 0;">S</div>
<div class="t" style="left:249px;top:326px;font-size:14px;line-height:14px;font-weight:normal;color:#000;transform:scaleX(0.915);transform-origin:0 0;">0000305407</div>
<div class="t" style="left:411px;top:326px;font-size:14px;line-height:14px;font-weight:normal;color:#9e976a;transform:scaleX(0.935);transform-origin:0 0;">E-72F-01/7</div>
<div class="t" style="left:633px;top:326px;font-size:14px;line-height:14px;font-weight:normal;color:#000;transform:scaleX(0.935);transform-origin:0 0;">0</div>
<div class="t" style="left:671px;top:326px;font-size:14px;line-height:14px;font-weight:normal;color:#000;transform:scaleX(0.915);transform-origin:0 0;">2003</div>
<div class="t" style="left:723px;top:326px;font-size:14px;line-height:14px;font-weight:normal;color:#000;transform:scaleX(0.935);transform-origin:0 0;">16</div>
<div style="position:absolute;left:164px;top:343px;width:43px;height:21px;background:#d9d9d9;border:1px solid #cdcea6;border-radius:3px"></div>
<div style="position:absolute;left:165px;top:344px;width:41px;height:19px;border-top:1px solid #6e6e6e;border-left:1px solid #6e6e6e;border-right:1px solid #f6f6e4;border-bottom:1px solid #f6f6e4;border-radius:2px"></div>
<div style="position:absolute;left:208px;top:343px;width:38px;height:21px;background:#d9d9d9;border:1px solid #cdcea6;border-radius:3px"></div>
<div style="position:absolute;left:209px;top:344px;width:36px;height:19px;border-top:1px solid #6e6e6e;border-left:1px solid #6e6e6e;border-right:1px solid #f6f6e4;border-bottom:1px solid #f6f6e4;border-radius:2px"></div>
<div style="position:absolute;left:246px;top:343px;width:163px;height:21px;background:#d9d9d9;border:1px solid #cdcea6;border-radius:3px"></div>
<div style="position:absolute;left:247px;top:344px;width:161px;height:19px;border-top:1px solid #6e6e6e;border-left:1px solid #6e6e6e;border-right:1px solid #f6f6e4;border-bottom:1px solid #f6f6e4;border-radius:2px"></div>
<div style="position:absolute;left:409px;top:343px;width:221px;height:21px;background:#d9d9d9;border:1px solid #cdcea6;border-radius:3px"></div>
<div style="position:absolute;left:410px;top:344px;width:219px;height:19px;border-top:1px solid #6e6e6e;border-left:1px solid #6e6e6e;border-right:1px solid #f6f6e4;border-bottom:1px solid #f6f6e4;border-radius:2px"></div>
<div style="position:absolute;left:630px;top:343px;width:38px;height:21px;background:#d9d9d9;border:1px solid #cdcea6;border-radius:3px"></div>
<div style="position:absolute;left:631px;top:344px;width:36px;height:19px;border-top:1px solid #6e6e6e;border-left:1px solid #6e6e6e;border-right:1px solid #f6f6e4;border-bottom:1px solid #f6f6e4;border-radius:2px"></div>
<div style="position:absolute;left:668px;top:343px;width:52px;height:21px;background:#d9d9d9;border:1px solid #cdcea6;border-radius:3px"></div>
<div style="position:absolute;left:669px;top:344px;width:50px;height:19px;border-top:1px solid #6e6e6e;border-left:1px solid #6e6e6e;border-right:1px solid #f6f6e4;border-bottom:1px solid #f6f6e4;border-radius:2px"></div>
<div style="position:absolute;left:720px;top:343px;width:57px;height:21px;background:#d9d9d9;border:1px solid #cdcea6;border-radius:3px"></div>
<div style="position:absolute;left:721px;top:344px;width:55px;height:19px;border-top:1px solid #6e6e6e;border-left:1px solid #6e6e6e;border-right:1px solid #f6f6e4;border-bottom:1px solid #f6f6e4;border-radius:2px"></div>
<div class="t" style="left:5px;width:200px;top:347px;font-size:14px;line-height:14px;color:#000;text-align:right;transform:scaleX(0.935);transform-origin:100% 0;">2</div>
<div class="t" style="left:211px;top:347px;font-size:14px;line-height:14px;font-weight:normal;color:#000;transform:scaleX(0.935);transform-origin:0 0;">S</div>
<div class="t" style="left:249px;top:347px;font-size:14px;line-height:14px;font-weight:normal;color:#000;transform:scaleX(0.915);transform-origin:0 0;">0000305408</div>
<div class="t" style="left:411px;top:347px;font-size:14px;line-height:14px;font-weight:normal;color:#9e976a;transform:scaleX(0.935);transform-origin:0 0;">E-72F-01/7</div>
<div class="t" style="left:633px;top:347px;font-size:14px;line-height:14px;font-weight:normal;color:#000;transform:scaleX(0.935);transform-origin:0 0;">0</div>
<div class="t" style="left:671px;top:347px;font-size:14px;line-height:14px;font-weight:normal;color:#000;transform:scaleX(0.915);transform-origin:0 0;">2003</div>
<div class="t" style="left:723px;top:347px;font-size:14px;line-height:14px;font-weight:normal;color:#000;transform:scaleX(0.935);transform-origin:0 0;">16</div>
<div style="position:absolute;left:164px;top:364px;width:43px;height:21px;background:#fff;border:1px solid #cdcea6;border-radius:3px"></div>
<div style="position:absolute;left:165px;top:365px;width:41px;height:19px;border-top:1px solid #6e6e6e;border-left:1px solid #6e6e6e;border-right:1px solid #f6f6e4;border-bottom:1px solid #f6f6e4;border-radius:2px"></div>
<div style="position:absolute;left:208px;top:364px;width:38px;height:21px;background:#fff;border:1px solid #cdcea6;border-radius:3px"></div>
<div style="position:absolute;left:209px;top:365px;width:36px;height:19px;border-top:1px solid #6e6e6e;border-left:1px solid #6e6e6e;border-right:1px solid #f6f6e4;border-bottom:1px solid #f6f6e4;border-radius:2px"></div>
<div style="position:absolute;left:246px;top:364px;width:163px;height:21px;background:#fff;border:1px solid #cdcea6;border-radius:3px"></div>
<div style="position:absolute;left:247px;top:365px;width:161px;height:19px;border-top:1px solid #6e6e6e;border-left:1px solid #6e6e6e;border-right:1px solid #f6f6e4;border-bottom:1px solid #f6f6e4;border-radius:2px"></div>
<div style="position:absolute;left:409px;top:364px;width:221px;height:21px;background:#fff;border:1px solid #cdcea6;border-radius:3px"></div>
<div style="position:absolute;left:410px;top:365px;width:219px;height:19px;border-top:1px solid #6e6e6e;border-left:1px solid #6e6e6e;border-right:1px solid #f6f6e4;border-bottom:1px solid #f6f6e4;border-radius:2px"></div>
<div style="position:absolute;left:630px;top:364px;width:38px;height:21px;background:#fff;border:1px solid #cdcea6;border-radius:3px"></div>
<div style="position:absolute;left:631px;top:365px;width:36px;height:19px;border-top:1px solid #6e6e6e;border-left:1px solid #6e6e6e;border-right:1px solid #f6f6e4;border-bottom:1px solid #f6f6e4;border-radius:2px"></div>
<div style="position:absolute;left:668px;top:364px;width:52px;height:21px;background:#fff;border:1px solid #cdcea6;border-radius:3px"></div>
<div style="position:absolute;left:669px;top:365px;width:50px;height:19px;border-top:1px solid #6e6e6e;border-left:1px solid #6e6e6e;border-right:1px solid #f6f6e4;border-bottom:1px solid #f6f6e4;border-radius:2px"></div>
<div style="position:absolute;left:720px;top:364px;width:57px;height:21px;background:#fff;border:1px solid #cdcea6;border-radius:3px"></div>
<div style="position:absolute;left:721px;top:365px;width:55px;height:19px;border-top:1px solid #6e6e6e;border-left:1px solid #6e6e6e;border-right:1px solid #f6f6e4;border-bottom:1px solid #f6f6e4;border-radius:2px"></div>
<div class="t" style="left:5px;width:200px;top:368px;font-size:14px;line-height:14px;color:#000;text-align:right;transform:scaleX(0.935);transform-origin:100% 0;">3</div>
<div class="t" style="left:211px;top:368px;font-size:14px;line-height:14px;font-weight:normal;color:#000;transform:scaleX(0.935);transform-origin:0 0;">S</div>
<div class="t" style="left:249px;top:368px;font-size:14px;line-height:14px;font-weight:normal;color:#000;transform:scaleX(0.915);transform-origin:0 0;">0000305410</div>
<div class="t" style="left:411px;top:368px;font-size:14px;line-height:14px;font-weight:normal;color:#9e976a;transform:scaleX(0.935);transform-origin:0 0;">E-72F-01/7</div>
<div class="t" style="left:633px;top:368px;font-size:14px;line-height:14px;font-weight:normal;color:#000;transform:scaleX(0.935);transform-origin:0 0;">0</div>
<div class="t" style="left:671px;top:368px;font-size:14px;line-height:14px;font-weight:normal;color:#000;transform:scaleX(0.915);transform-origin:0 0;">2003</div>
<div class="t" style="left:723px;top:368px;font-size:14px;line-height:14px;font-weight:normal;color:#000;transform:scaleX(0.935);transform-origin:0 0;">16</div>
<div style="position:absolute;left:164px;top:385px;width:43px;height:21px;background:#fff;border:1px solid #cdcea6;border-radius:3px"></div>
<div style="position:absolute;left:165px;top:386px;width:41px;height:19px;border-top:1px solid #6e6e6e;border-left:1px solid #6e6e6e;border-right:1px solid #f6f6e4;border-bottom:1px solid #f6f6e4;border-radius:2px"></div>
<div style="position:absolute;left:208px;top:385px;width:38px;height:21px;background:#fff;border:1px solid #cdcea6;border-radius:3px"></div>
<div style="position:absolute;left:209px;top:386px;width:36px;height:19px;border-top:1px solid #6e6e6e;border-left:1px solid #6e6e6e;border-right:1px solid #f6f6e4;border-bottom:1px solid #f6f6e4;border-radius:2px"></div>
<div style="position:absolute;left:246px;top:385px;width:163px;height:21px;background:#fff;border:1px solid #cdcea6;border-radius:3px"></div>
<div style="position:absolute;left:247px;top:386px;width:161px;height:19px;border-top:1px solid #6e6e6e;border-left:1px solid #6e6e6e;border-right:1px solid #f6f6e4;border-bottom:1px solid #f6f6e4;border-radius:2px"></div>
<div style="position:absolute;left:409px;top:385px;width:221px;height:21px;background:#fff;border:1px solid #cdcea6;border-radius:3px"></div>
<div style="position:absolute;left:410px;top:386px;width:219px;height:19px;border-top:1px solid #6e6e6e;border-left:1px solid #6e6e6e;border-right:1px solid #f6f6e4;border-bottom:1px solid #f6f6e4;border-radius:2px"></div>
<div style="position:absolute;left:630px;top:385px;width:38px;height:21px;background:#fff;border:1px solid #cdcea6;border-radius:3px"></div>
<div style="position:absolute;left:631px;top:386px;width:36px;height:19px;border-top:1px solid #6e6e6e;border-left:1px solid #6e6e6e;border-right:1px solid #f6f6e4;border-bottom:1px solid #f6f6e4;border-radius:2px"></div>
<div style="position:absolute;left:668px;top:385px;width:52px;height:21px;background:#fff;border:1px solid #cdcea6;border-radius:3px"></div>
<div style="position:absolute;left:669px;top:386px;width:50px;height:19px;border-top:1px solid #6e6e6e;border-left:1px solid #6e6e6e;border-right:1px solid #f6f6e4;border-bottom:1px solid #f6f6e4;border-radius:2px"></div>
<div style="position:absolute;left:720px;top:385px;width:57px;height:21px;background:#fff;border:1px solid #cdcea6;border-radius:3px"></div>
<div style="position:absolute;left:721px;top:386px;width:55px;height:19px;border-top:1px solid #6e6e6e;border-left:1px solid #6e6e6e;border-right:1px solid #f6f6e4;border-bottom:1px solid #f6f6e4;border-radius:2px"></div>
<div class="t" style="left:5px;width:200px;top:389px;font-size:14px;line-height:14px;color:#000;text-align:right;transform:scaleX(0.935);transform-origin:100% 0;">4</div>
<div class="t" style="left:211px;top:389px;font-size:14px;line-height:14px;font-weight:normal;color:#000;transform:scaleX(0.935);transform-origin:0 0;">S</div>
<div class="t" style="left:249px;top:389px;font-size:14px;line-height:14px;font-weight:normal;color:#000;transform:scaleX(0.915);transform-origin:0 0;">0000305412</div>
<div class="t" style="left:411px;top:389px;font-size:14px;line-height:14px;font-weight:normal;color:#9e976a;transform:scaleX(0.935);transform-origin:0 0;">E-72F-01/7</div>
<div class="t" style="left:633px;top:389px;font-size:14px;line-height:14px;font-weight:normal;color:#000;transform:scaleX(0.935);transform-origin:0 0;">0</div>
<div class="t" style="left:671px;top:389px;font-size:14px;line-height:14px;font-weight:normal;color:#000;transform:scaleX(0.915);transform-origin:0 0;">2003</div>
<div class="t" style="left:723px;top:389px;font-size:14px;line-height:14px;font-weight:normal;color:#000;transform:scaleX(0.935);transform-origin:0 0;">16</div>
<div style="position:absolute;left:164px;top:407px;width:43px;height:21px;background:#fff;border:1px solid #cdcea6;border-radius:3px"></div>
<div style="position:absolute;left:165px;top:408px;width:41px;height:19px;border-top:1px solid #6e6e6e;border-left:1px solid #6e6e6e;border-right:1px solid #f6f6e4;border-bottom:1px solid #f6f6e4;border-radius:2px"></div>
<div style="position:absolute;left:208px;top:407px;width:38px;height:21px;background:#fff;border:1px solid #cdcea6;border-radius:3px"></div>
<div style="position:absolute;left:209px;top:408px;width:36px;height:19px;border-top:1px solid #6e6e6e;border-left:1px solid #6e6e6e;border-right:1px solid #f6f6e4;border-bottom:1px solid #f6f6e4;border-radius:2px"></div>
<div style="position:absolute;left:246px;top:407px;width:163px;height:21px;background:#fff;border:1px solid #cdcea6;border-radius:3px"></div>
<div style="position:absolute;left:247px;top:408px;width:161px;height:19px;border-top:1px solid #6e6e6e;border-left:1px solid #6e6e6e;border-right:1px solid #f6f6e4;border-bottom:1px solid #f6f6e4;border-radius:2px"></div>
<div style="position:absolute;left:409px;top:407px;width:221px;height:21px;background:#fff;border:1px solid #cdcea6;border-radius:3px"></div>
<div style="position:absolute;left:410px;top:408px;width:219px;height:19px;border-top:1px solid #6e6e6e;border-left:1px solid #6e6e6e;border-right:1px solid #f6f6e4;border-bottom:1px solid #f6f6e4;border-radius:2px"></div>
<div style="position:absolute;left:630px;top:407px;width:38px;height:21px;background:#fff;border:1px solid #cdcea6;border-radius:3px"></div>
<div style="position:absolute;left:631px;top:408px;width:36px;height:19px;border-top:1px solid #6e6e6e;border-left:1px solid #6e6e6e;border-right:1px solid #f6f6e4;border-bottom:1px solid #f6f6e4;border-radius:2px"></div>
<div style="position:absolute;left:668px;top:407px;width:52px;height:21px;background:#fff;border:1px solid #cdcea6;border-radius:3px"></div>
<div style="position:absolute;left:669px;top:408px;width:50px;height:19px;border-top:1px solid #6e6e6e;border-left:1px solid #6e6e6e;border-right:1px solid #f6f6e4;border-bottom:1px solid #f6f6e4;border-radius:2px"></div>
<div style="position:absolute;left:720px;top:407px;width:57px;height:21px;background:#fff;border:1px solid #cdcea6;border-radius:3px"></div>
<div style="position:absolute;left:721px;top:408px;width:55px;height:19px;border-top:1px solid #6e6e6e;border-left:1px solid #6e6e6e;border-right:1px solid #f6f6e4;border-bottom:1px solid #f6f6e4;border-radius:2px"></div>
<div class="t" style="left:5px;width:200px;top:411px;font-size:14px;line-height:14px;color:#000;text-align:right;transform:scaleX(0.935);transform-origin:100% 0;">5</div>
<div class="t" style="left:211px;top:411px;font-size:14px;line-height:14px;font-weight:normal;color:#000;transform:scaleX(0.935);transform-origin:0 0;">S</div>
<div class="t" style="left:249px;top:411px;font-size:14px;line-height:14px;font-weight:normal;color:#000;transform:scaleX(0.915);transform-origin:0 0;">0000305413</div>
<div class="t" style="left:411px;top:411px;font-size:14px;line-height:14px;font-weight:normal;color:#9e976a;transform:scaleX(0.935);transform-origin:0 0;">E-72F-01/7</div>
<div class="t" style="left:633px;top:411px;font-size:14px;line-height:14px;font-weight:normal;color:#000;transform:scaleX(0.935);transform-origin:0 0;">0</div>
<div class="t" style="left:671px;top:411px;font-size:14px;line-height:14px;font-weight:normal;color:#000;transform:scaleX(0.915);transform-origin:0 0;">2003</div>
<div class="t" style="left:723px;top:411px;font-size:14px;line-height:14px;font-weight:normal;color:#000;transform:scaleX(0.935);transform-origin:0 0;">16</div>
<div style="position:absolute;left:164px;top:428px;width:43px;height:21px;background:#fff;border:1px solid #cdcea6;border-radius:3px"></div>
<div style="position:absolute;left:165px;top:429px;width:41px;height:19px;border-top:1px solid #6e6e6e;border-left:1px solid #6e6e6e;border-right:1px solid #f6f6e4;border-bottom:1px solid #f6f6e4;border-radius:2px"></div>
<div style="position:absolute;left:208px;top:428px;width:38px;height:21px;background:#fff;border:1px solid #cdcea6;border-radius:3px"></div>
<div style="position:absolute;left:209px;top:429px;width:36px;height:19px;border-top:1px solid #6e6e6e;border-left:1px solid #6e6e6e;border-right:1px solid #f6f6e4;border-bottom:1px solid #f6f6e4;border-radius:2px"></div>
<div style="position:absolute;left:246px;top:428px;width:163px;height:21px;background:#fff;border:1px solid #cdcea6;border-radius:3px"></div>
<div style="position:absolute;left:247px;top:429px;width:161px;height:19px;border-top:1px solid #6e6e6e;border-left:1px solid #6e6e6e;border-right:1px solid #f6f6e4;border-bottom:1px solid #f6f6e4;border-radius:2px"></div>
<div style="position:absolute;left:409px;top:428px;width:221px;height:21px;background:#fff;border:1px solid #cdcea6;border-radius:3px"></div>
<div style="position:absolute;left:410px;top:429px;width:219px;height:19px;border-top:1px solid #6e6e6e;border-left:1px solid #6e6e6e;border-right:1px solid #f6f6e4;border-bottom:1px solid #f6f6e4;border-radius:2px"></div>
<div style="position:absolute;left:630px;top:428px;width:38px;height:21px;background:#fff;border:1px solid #cdcea6;border-radius:3px"></div>
<div style="position:absolute;left:631px;top:429px;width:36px;height:19px;border-top:1px solid #6e6e6e;border-left:1px solid #6e6e6e;border-right:1px solid #f6f6e4;border-bottom:1px solid #f6f6e4;border-radius:2px"></div>
<div style="position:absolute;left:668px;top:428px;width:52px;height:21px;background:#fff;border:1px solid #cdcea6;border-radius:3px"></div>
<div style="position:absolute;left:669px;top:429px;width:50px;height:19px;border-top:1px solid #6e6e6e;border-left:1px solid #6e6e6e;border-right:1px solid #f6f6e4;border-bottom:1px solid #f6f6e4;border-radius:2px"></div>
<div style="position:absolute;left:720px;top:428px;width:57px;height:21px;background:#fff;border:1px solid #cdcea6;border-radius:3px"></div>
<div style="position:absolute;left:721px;top:429px;width:55px;height:19px;border-top:1px solid #6e6e6e;border-left:1px solid #6e6e6e;border-right:1px solid #f6f6e4;border-bottom:1px solid #f6f6e4;border-radius:2px"></div>
<div class="t" style="left:5px;width:200px;top:432px;font-size:14px;line-height:14px;color:#000;text-align:right;transform:scaleX(0.935);transform-origin:100% 0;">6</div>
<div class="t" style="left:211px;top:432px;font-size:14px;line-height:14px;font-weight:normal;color:#000;transform:scaleX(0.935);transform-origin:0 0;">S</div>
<div class="t" style="left:249px;top:432px;font-size:14px;line-height:14px;font-weight:normal;color:#000;transform:scaleX(0.915);transform-origin:0 0;">0000305414</div>
<div class="t" style="left:411px;top:432px;font-size:14px;line-height:14px;font-weight:normal;color:#9e976a;transform:scaleX(0.935);transform-origin:0 0;">E-72F-01/7</div>
<div class="t" style="left:633px;top:432px;font-size:14px;line-height:14px;font-weight:normal;color:#000;transform:scaleX(0.935);transform-origin:0 0;">0</div>
<div class="t" style="left:671px;top:432px;font-size:14px;line-height:14px;font-weight:normal;color:#000;transform:scaleX(0.915);transform-origin:0 0;">2003</div>
<div class="t" style="left:723px;top:432px;font-size:14px;line-height:14px;font-weight:normal;color:#000;transform:scaleX(0.935);transform-origin:0 0;">16</div>
<div style="position:absolute;left:164px;top:449px;width:43px;height:21px;background:#fff;border:1px solid #cdcea6;border-radius:3px"></div>
<div style="position:absolute;left:165px;top:450px;width:41px;height:19px;border-top:1px solid #6e6e6e;border-left:1px solid #6e6e6e;border-right:1px solid #f6f6e4;border-bottom:1px solid #f6f6e4;border-radius:2px"></div>
<div style="position:absolute;left:208px;top:449px;width:38px;height:21px;background:#fff;border:1px solid #cdcea6;border-radius:3px"></div>
<div style="position:absolute;left:209px;top:450px;width:36px;height:19px;border-top:1px solid #6e6e6e;border-left:1px solid #6e6e6e;border-right:1px solid #f6f6e4;border-bottom:1px solid #f6f6e4;border-radius:2px"></div>
<div style="position:absolute;left:246px;top:449px;width:163px;height:21px;background:#fff;border:1px solid #cdcea6;border-radius:3px"></div>
<div style="position:absolute;left:247px;top:450px;width:161px;height:19px;border-top:1px solid #6e6e6e;border-left:1px solid #6e6e6e;border-right:1px solid #f6f6e4;border-bottom:1px solid #f6f6e4;border-radius:2px"></div>
<div style="position:absolute;left:409px;top:449px;width:221px;height:21px;background:#fff;border:1px solid #cdcea6;border-radius:3px"></div>
<div style="position:absolute;left:410px;top:450px;width:219px;height:19px;border-top:1px solid #6e6e6e;border-left:1px solid #6e6e6e;border-right:1px solid #f6f6e4;border-bottom:1px solid #f6f6e4;border-radius:2px"></div>
<div style="position:absolute;left:630px;top:449px;width:38px;height:21px;background:#fff;border:1px solid #cdcea6;border-radius:3px"></div>
<div style="position:absolute;left:631px;top:450px;width:36px;height:19px;border-top:1px solid #6e6e6e;border-left:1px solid #6e6e6e;border-right:1px solid #f6f6e4;border-bottom:1px solid #f6f6e4;border-radius:2px"></div>
<div style="position:absolute;left:668px;top:449px;width:52px;height:21px;background:#fff;border:1px solid #cdcea6;border-radius:3px"></div>
<div style="position:absolute;left:669px;top:450px;width:50px;height:19px;border-top:1px solid #6e6e6e;border-left:1px solid #6e6e6e;border-right:1px solid #f6f6e4;border-bottom:1px solid #f6f6e4;border-radius:2px"></div>
<div style="position:absolute;left:720px;top:449px;width:57px;height:21px;background:#fff;border:1px solid #cdcea6;border-radius:3px"></div>
<div style="position:absolute;left:721px;top:450px;width:55px;height:19px;border-top:1px solid #6e6e6e;border-left:1px solid #6e6e6e;border-right:1px solid #f6f6e4;border-bottom:1px solid #f6f6e4;border-radius:2px"></div>
<div class="t" style="left:5px;width:200px;top:453px;font-size:14px;line-height:14px;color:#000;text-align:right;transform:scaleX(0.935);transform-origin:100% 0;">7</div>
<div class="t" style="left:211px;top:453px;font-size:14px;line-height:14px;font-weight:normal;color:#000;transform:scaleX(0.935);transform-origin:0 0;">S</div>
<div class="t" style="left:249px;top:453px;font-size:14px;line-height:14px;font-weight:normal;color:#000;transform:scaleX(0.915);transform-origin:0 0;">0000305415</div>
<div class="t" style="left:411px;top:453px;font-size:14px;line-height:14px;font-weight:normal;color:#9e976a;transform:scaleX(0.935);transform-origin:0 0;">E-72F-01/7</div>
<div class="t" style="left:633px;top:453px;font-size:14px;line-height:14px;font-weight:normal;color:#000;transform:scaleX(0.935);transform-origin:0 0;">0</div>
<div class="t" style="left:671px;top:453px;font-size:14px;line-height:14px;font-weight:normal;color:#000;transform:scaleX(0.915);transform-origin:0 0;">2003</div>
<div class="t" style="left:723px;top:453px;font-size:14px;line-height:14px;font-weight:normal;color:#000;transform:scaleX(0.935);transform-origin:0 0;">16</div>
<div style="position:absolute;left:164px;top:470px;width:43px;height:21px;background:#fff;border:1px solid #cdcea6;border-radius:3px"></div>
<div style="position:absolute;left:165px;top:471px;width:41px;height:19px;border-top:1px solid #6e6e6e;border-left:1px solid #6e6e6e;border-right:1px solid #f6f6e4;border-bottom:1px solid #f6f6e4;border-radius:2px"></div>
<div style="position:absolute;left:208px;top:470px;width:38px;height:21px;background:#fff;border:1px solid #cdcea6;border-radius:3px"></div>
<div style="position:absolute;left:209px;top:471px;width:36px;height:19px;border-top:1px solid #6e6e6e;border-left:1px solid #6e6e6e;border-right:1px solid #f6f6e4;border-bottom:1px solid #f6f6e4;border-radius:2px"></div>
<div style="position:absolute;left:246px;top:470px;width:163px;height:21px;background:#fff;border:1px solid #cdcea6;border-radius:3px"></div>
<div style="position:absolute;left:247px;top:471px;width:161px;height:19px;border-top:1px solid #6e6e6e;border-left:1px solid #6e6e6e;border-right:1px solid #f6f6e4;border-bottom:1px solid #f6f6e4;border-radius:2px"></div>
<div style="position:absolute;left:409px;top:470px;width:221px;height:21px;background:#fff;border:1px solid #cdcea6;border-radius:3px"></div>
<div style="position:absolute;left:410px;top:471px;width:219px;height:19px;border-top:1px solid #6e6e6e;border-left:1px solid #6e6e6e;border-right:1px solid #f6f6e4;border-bottom:1px solid #f6f6e4;border-radius:2px"></div>
<div style="position:absolute;left:630px;top:470px;width:38px;height:21px;background:#fff;border:1px solid #cdcea6;border-radius:3px"></div>
<div style="position:absolute;left:631px;top:471px;width:36px;height:19px;border-top:1px solid #6e6e6e;border-left:1px solid #6e6e6e;border-right:1px solid #f6f6e4;border-bottom:1px solid #f6f6e4;border-radius:2px"></div>
<div style="position:absolute;left:668px;top:470px;width:52px;height:21px;background:#fff;border:1px solid #cdcea6;border-radius:3px"></div>
<div style="position:absolute;left:669px;top:471px;width:50px;height:19px;border-top:1px solid #6e6e6e;border-left:1px solid #6e6e6e;border-right:1px solid #f6f6e4;border-bottom:1px solid #f6f6e4;border-radius:2px"></div>
<div style="position:absolute;left:720px;top:470px;width:57px;height:21px;background:#fff;border:1px solid #cdcea6;border-radius:3px"></div>
<div style="position:absolute;left:721px;top:471px;width:55px;height:19px;border-top:1px solid #6e6e6e;border-left:1px solid #6e6e6e;border-right:1px solid #f6f6e4;border-bottom:1px solid #f6f6e4;border-radius:2px"></div>
<div class="t" style="left:5px;width:200px;top:474px;font-size:14px;line-height:14px;color:#000;text-align:right;transform:scaleX(0.935);transform-origin:100% 0;">8</div>
<div class="t" style="left:211px;top:474px;font-size:14px;line-height:14px;font-weight:normal;color:#000;transform:scaleX(0.935);transform-origin:0 0;">S</div>
<div class="t" style="left:249px;top:474px;font-size:14px;line-height:14px;font-weight:normal;color:#000;transform:scaleX(0.915);transform-origin:0 0;">0000305416</div>
<div class="t" style="left:411px;top:474px;font-size:14px;line-height:14px;font-weight:normal;color:#9e976a;transform:scaleX(0.935);transform-origin:0 0;">E-72F-01/7</div>
<div class="t" style="left:633px;top:474px;font-size:14px;line-height:14px;font-weight:normal;color:#000;transform:scaleX(0.935);transform-origin:0 0;">0</div>
<div class="t" style="left:671px;top:474px;font-size:14px;line-height:14px;font-weight:normal;color:#000;transform:scaleX(0.915);transform-origin:0 0;">2003</div>
<div class="t" style="left:723px;top:474px;font-size:14px;line-height:14px;font-weight:normal;color:#000;transform:scaleX(0.935);transform-origin:0 0;">16</div>
<div style="position:absolute;left:164px;top:491px;width:43px;height:21px;background:#fff;border:1px solid #cdcea6;border-radius:3px"></div>
<div style="position:absolute;left:165px;top:492px;width:41px;height:19px;border-top:1px solid #6e6e6e;border-left:1px solid #6e6e6e;border-right:1px solid #f6f6e4;border-bottom:1px solid #f6f6e4;border-radius:2px"></div>
<div style="position:absolute;left:208px;top:491px;width:38px;height:21px;background:#fff;border:1px solid #cdcea6;border-radius:3px"></div>
<div style="position:absolute;left:209px;top:492px;width:36px;height:19px;border-top:1px solid #6e6e6e;border-left:1px solid #6e6e6e;border-right:1px solid #f6f6e4;border-bottom:1px solid #f6f6e4;border-radius:2px"></div>
<div style="position:absolute;left:246px;top:491px;width:163px;height:21px;background:#fff;border:1px solid #cdcea6;border-radius:3px"></div>
<div style="position:absolute;left:247px;top:492px;width:161px;height:19px;border-top:1px solid #6e6e6e;border-left:1px solid #6e6e6e;border-right:1px solid #f6f6e4;border-bottom:1px solid #f6f6e4;border-radius:2px"></div>
<div style="position:absolute;left:409px;top:491px;width:221px;height:21px;background:#fff;border:1px solid #cdcea6;border-radius:3px"></div>
<div style="position:absolute;left:410px;top:492px;width:219px;height:19px;border-top:1px solid #6e6e6e;border-left:1px solid #6e6e6e;border-right:1px solid #f6f6e4;border-bottom:1px solid #f6f6e4;border-radius:2px"></div>
<div style="position:absolute;left:630px;top:491px;width:38px;height:21px;background:#fff;border:1px solid #cdcea6;border-radius:3px"></div>
<div style="position:absolute;left:631px;top:492px;width:36px;height:19px;border-top:1px solid #6e6e6e;border-left:1px solid #6e6e6e;border-right:1px solid #f6f6e4;border-bottom:1px solid #f6f6e4;border-radius:2px"></div>
<div style="position:absolute;left:668px;top:491px;width:52px;height:21px;background:#fff;border:1px solid #cdcea6;border-radius:3px"></div>
<div style="position:absolute;left:669px;top:492px;width:50px;height:19px;border-top:1px solid #6e6e6e;border-left:1px solid #6e6e6e;border-right:1px solid #f6f6e4;border-bottom:1px solid #f6f6e4;border-radius:2px"></div>
<div style="position:absolute;left:720px;top:491px;width:57px;height:21px;background:#fff;border:1px solid #cdcea6;border-radius:3px"></div>
<div style="position:absolute;left:721px;top:492px;width:55px;height:19px;border-top:1px solid #6e6e6e;border-left:1px solid #6e6e6e;border-right:1px solid #f6f6e4;border-bottom:1px solid #f6f6e4;border-radius:2px"></div>
<div class="t" style="left:5px;width:200px;top:495px;font-size:14px;line-height:14px;color:#000;text-align:right;transform:scaleX(0.935);transform-origin:100% 0;">9</div>
<div class="t" style="left:211px;top:495px;font-size:14px;line-height:14px;font-weight:normal;color:#000;transform:scaleX(0.935);transform-origin:0 0;">S</div>
<div class="t" style="left:249px;top:495px;font-size:14px;line-height:14px;font-weight:normal;color:#000;transform:scaleX(0.915);transform-origin:0 0;">0000305418</div>
<div class="t" style="left:411px;top:495px;font-size:14px;line-height:14px;font-weight:normal;color:#9e976a;transform:scaleX(0.935);transform-origin:0 0;">E-72F-01/7</div>
<div class="t" style="left:633px;top:495px;font-size:14px;line-height:14px;font-weight:normal;color:#000;transform:scaleX(0.935);transform-origin:0 0;">0</div>
<div class="t" style="left:671px;top:495px;font-size:14px;line-height:14px;font-weight:normal;color:#000;transform:scaleX(0.915);transform-origin:0 0;">2003</div>
<div class="t" style="left:723px;top:495px;font-size:14px;line-height:14px;font-weight:normal;color:#000;transform:scaleX(0.935);transform-origin:0 0;">16</div>
<div style="position:absolute;left:164px;top:512px;width:43px;height:21px;background:#fff;border:1px solid #cdcea6;border-radius:3px"></div>
<div style="position:absolute;left:165px;top:513px;width:41px;height:19px;border-top:1px solid #6e6e6e;border-left:1px solid #6e6e6e;border-right:1px solid #f6f6e4;border-bottom:1px solid #f6f6e4;border-radius:2px"></div>
<div style="position:absolute;left:208px;top:512px;width:38px;height:21px;background:#fff;border:1px solid #cdcea6;border-radius:3px"></div>
<div style="position:absolute;left:209px;top:513px;width:36px;height:19px;border-top:1px solid #6e6e6e;border-left:1px solid #6e6e6e;border-right:1px solid #f6f6e4;border-bottom:1px solid #f6f6e4;border-radius:2px"></div>
<div style="position:absolute;left:246px;top:512px;width:163px;height:21px;background:#fff;border:1px solid #cdcea6;border-radius:3px"></div>
<div style="position:absolute;left:247px;top:513px;width:161px;height:19px;border-top:1px solid #6e6e6e;border-left:1px solid #6e6e6e;border-right:1px solid #f6f6e4;border-bottom:1px solid #f6f6e4;border-radius:2px"></div>
<div style="position:absolute;left:409px;top:512px;width:221px;height:21px;background:#fff;border:1px solid #cdcea6;border-radius:3px"></div>
<div style="position:absolute;left:410px;top:513px;width:219px;height:19px;border-top:1px solid #6e6e6e;border-left:1px solid #6e6e6e;border-right:1px solid #f6f6e4;border-bottom:1px solid #f6f6e4;border-radius:2px"></div>
<div style="position:absolute;left:630px;top:512px;width:38px;height:21px;background:#fff;border:1px solid #cdcea6;border-radius:3px"></div>
<div style="position:absolute;left:631px;top:513px;width:36px;height:19px;border-top:1px solid #6e6e6e;border-left:1px solid #6e6e6e;border-right:1px solid #f6f6e4;border-bottom:1px solid #f6f6e4;border-radius:2px"></div>
<div style="position:absolute;left:668px;top:512px;width:52px;height:21px;background:#fff;border:1px solid #cdcea6;border-radius:3px"></div>
<div style="position:absolute;left:669px;top:513px;width:50px;height:19px;border-top:1px solid #6e6e6e;border-left:1px solid #6e6e6e;border-right:1px solid #f6f6e4;border-bottom:1px solid #f6f6e4;border-radius:2px"></div>
<div style="position:absolute;left:720px;top:512px;width:57px;height:21px;background:#fff;border:1px solid #cdcea6;border-radius:3px"></div>
<div style="position:absolute;left:721px;top:513px;width:55px;height:19px;border-top:1px solid #6e6e6e;border-left:1px solid #6e6e6e;border-right:1px solid #f6f6e4;border-bottom:1px solid #f6f6e4;border-radius:2px"></div>
<div class="t" style="left:5px;width:200px;top:516px;font-size:14px;line-height:14px;color:#000;text-align:right;transform:scaleX(0.935);transform-origin:100% 0;">10</div>
<div class="t" style="left:211px;top:516px;font-size:14px;line-height:14px;font-weight:normal;color:#000;transform:scaleX(0.935);transform-origin:0 0;">S</div>
<div class="t" style="left:249px;top:516px;font-size:14px;line-height:14px;font-weight:normal;color:#000;transform:scaleX(0.915);transform-origin:0 0;">0000305419</div>
<div class="t" style="left:411px;top:516px;font-size:14px;line-height:14px;font-weight:normal;color:#9e976a;transform:scaleX(0.935);transform-origin:0 0;">E-72F-01/7</div>
<div class="t" style="left:633px;top:516px;font-size:14px;line-height:14px;font-weight:normal;color:#000;transform:scaleX(0.935);transform-origin:0 0;">0</div>
<div class="t" style="left:671px;top:516px;font-size:14px;line-height:14px;font-weight:normal;color:#000;transform:scaleX(0.915);transform-origin:0 0;">2003</div>
<div class="t" style="left:723px;top:516px;font-size:14px;line-height:14px;font-weight:normal;color:#000;transform:scaleX(0.935);transform-origin:0 0;">16</div>
<div style="position:absolute;left:164px;top:534px;width:43px;height:21px;background:#fff;border:1px solid #cdcea6;border-radius:3px"></div>
<div style="position:absolute;left:165px;top:535px;width:41px;height:19px;border-top:1px solid #6e6e6e;border-left:1px solid #6e6e6e;border-right:1px solid #f6f6e4;border-bottom:1px solid #f6f6e4;border-radius:2px"></div>
<div style="position:absolute;left:208px;top:534px;width:38px;height:21px;background:#fff;border:1px solid #cdcea6;border-radius:3px"></div>
<div style="position:absolute;left:209px;top:535px;width:36px;height:19px;border-top:1px solid #6e6e6e;border-left:1px solid #6e6e6e;border-right:1px solid #f6f6e4;border-bottom:1px solid #f6f6e4;border-radius:2px"></div>
<div style="position:absolute;left:246px;top:534px;width:163px;height:21px;background:#fff;border:1px solid #cdcea6;border-radius:3px"></div>
<div style="position:absolute;left:247px;top:535px;width:161px;height:19px;border-top:1px solid #6e6e6e;border-left:1px solid #6e6e6e;border-right:1px solid #f6f6e4;border-bottom:1px solid #f6f6e4;border-radius:2px"></div>
<div style="position:absolute;left:409px;top:534px;width:221px;height:21px;background:#fff;border:1px solid #cdcea6;border-radius:3px"></div>
<div style="position:absolute;left:410px;top:535px;width:219px;height:19px;border-top:1px solid #6e6e6e;border-left:1px solid #6e6e6e;border-right:1px solid #f6f6e4;border-bottom:1px solid #f6f6e4;border-radius:2px"></div>
<div style="position:absolute;left:630px;top:534px;width:38px;height:21px;background:#fff;border:1px solid #cdcea6;border-radius:3px"></div>
<div style="position:absolute;left:631px;top:535px;width:36px;height:19px;border-top:1px solid #6e6e6e;border-left:1px solid #6e6e6e;border-right:1px solid #f6f6e4;border-bottom:1px solid #f6f6e4;border-radius:2px"></div>
<div style="position:absolute;left:668px;top:534px;width:52px;height:21px;background:#fff;border:1px solid #cdcea6;border-radius:3px"></div>
<div style="position:absolute;left:669px;top:535px;width:50px;height:19px;border-top:1px solid #6e6e6e;border-left:1px solid #6e6e6e;border-right:1px solid #f6f6e4;border-bottom:1px solid #f6f6e4;border-radius:2px"></div>
<div style="position:absolute;left:720px;top:534px;width:57px;height:21px;background:#fff;border:1px solid #cdcea6;border-radius:3px"></div>
<div style="position:absolute;left:721px;top:535px;width:55px;height:19px;border-top:1px solid #6e6e6e;border-left:1px solid #6e6e6e;border-right:1px solid #f6f6e4;border-bottom:1px solid #f6f6e4;border-radius:2px"></div>
<div class="t" style="left:5px;width:200px;top:538px;font-size:14px;line-height:14px;color:#000;text-align:right;transform:scaleX(0.935);transform-origin:100% 0;">11</div>
<div class="t" style="left:211px;top:538px;font-size:14px;line-height:14px;font-weight:normal;color:#000;transform:scaleX(0.935);transform-origin:0 0;">S</div>
<div class="t" style="left:249px;top:538px;font-size:14px;line-height:14px;font-weight:normal;color:#000;transform:scaleX(0.915);transform-origin:0 0;">0000305420</div>
<div class="t" style="left:411px;top:538px;font-size:14px;line-height:14px;font-weight:normal;color:#9e976a;transform:scaleX(0.935);transform-origin:0 0;">E-72F-01/7</div>
<div class="t" style="left:633px;top:538px;font-size:14px;line-height:14px;font-weight:normal;color:#000;transform:scaleX(0.935);transform-origin:0 0;">0</div>
<div class="t" style="left:671px;top:538px;font-size:14px;line-height:14px;font-weight:normal;color:#000;transform:scaleX(0.915);transform-origin:0 0;">2003</div>
<div class="t" style="left:723px;top:538px;font-size:14px;line-height:14px;font-weight:normal;color:#000;transform:scaleX(0.935);transform-origin:0 0;">16</div>
<div style="position:absolute;left:164px;top:555px;width:43px;height:21px;background:#fff;border:1px solid #cdcea6;border-radius:3px"></div>
<div style="position:absolute;left:165px;top:556px;width:41px;height:19px;border-top:1px solid #6e6e6e;border-left:1px solid #6e6e6e;border-right:1px solid #f6f6e4;border-bottom:1px solid #f6f6e4;border-radius:2px"></div>
<div style="position:absolute;left:208px;top:555px;width:38px;height:21px;background:#fff;border:1px solid #cdcea6;border-radius:3px"></div>
<div style="position:absolute;left:209px;top:556px;width:36px;height:19px;border-top:1px solid #6e6e6e;border-left:1px solid #6e6e6e;border-right:1px solid #f6f6e4;border-bottom:1px solid #f6f6e4;border-radius:2px"></div>
<div style="position:absolute;left:246px;top:555px;width:163px;height:21px;background:#fff;border:1px solid #cdcea6;border-radius:3px"></div>
<div style="position:absolute;left:247px;top:556px;width:161px;height:19px;border-top:1px solid #6e6e6e;border-left:1px solid #6e6e6e;border-right:1px solid #f6f6e4;border-bottom:1px solid #f6f6e4;border-radius:2px"></div>
<div style="position:absolute;left:409px;top:555px;width:221px;height:21px;background:#fff;border:1px solid #cdcea6;border-radius:3px"></div>
<div style="position:absolute;left:410px;top:556px;width:219px;height:19px;border-top:1px solid #6e6e6e;border-left:1px solid #6e6e6e;border-right:1px solid #f6f6e4;border-bottom:1px solid #f6f6e4;border-radius:2px"></div>
<div style="position:absolute;left:630px;top:555px;width:38px;height:21px;background:#fff;border:1px solid #cdcea6;border-radius:3px"></div>
<div style="position:absolute;left:631px;top:556px;width:36px;height:19px;border-top:1px solid #6e6e6e;border-left:1px solid #6e6e6e;border-right:1px solid #f6f6e4;border-bottom:1px solid #f6f6e4;border-radius:2px"></div>
<div style="position:absolute;left:668px;top:555px;width:52px;height:21px;background:#fff;border:1px solid #cdcea6;border-radius:3px"></div>
<div style="position:absolute;left:669px;top:556px;width:50px;height:19px;border-top:1px solid #6e6e6e;border-left:1px solid #6e6e6e;border-right:1px solid #f6f6e4;border-bottom:1px solid #f6f6e4;border-radius:2px"></div>
<div style="position:absolute;left:720px;top:555px;width:57px;height:21px;background:#fff;border:1px solid #cdcea6;border-radius:3px"></div>
<div style="position:absolute;left:721px;top:556px;width:55px;height:19px;border-top:1px solid #6e6e6e;border-left:1px solid #6e6e6e;border-right:1px solid #f6f6e4;border-bottom:1px solid #f6f6e4;border-radius:2px"></div>
<div class="t" style="left:5px;width:200px;top:559px;font-size:14px;line-height:14px;color:#000;text-align:right;transform:scaleX(0.935);transform-origin:100% 0;">12</div>
<div class="t" style="left:211px;top:559px;font-size:14px;line-height:14px;font-weight:normal;color:#000;transform:scaleX(0.935);transform-origin:0 0;">S</div>
<div class="t" style="left:249px;top:559px;font-size:14px;line-height:14px;font-weight:normal;color:#000;transform:scaleX(0.915);transform-origin:0 0;">0000305421</div>
<div class="t" style="left:411px;top:559px;font-size:14px;line-height:14px;font-weight:normal;color:#9e976a;transform:scaleX(0.935);transform-origin:0 0;">E-72F-01/7</div>
<div class="t" style="left:633px;top:559px;font-size:14px;line-height:14px;font-weight:normal;color:#000;transform:scaleX(0.935);transform-origin:0 0;">0</div>
<div class="t" style="left:671px;top:559px;font-size:14px;line-height:14px;font-weight:normal;color:#000;transform:scaleX(0.915);transform-origin:0 0;">2003</div>
<div class="t" style="left:723px;top:559px;font-size:14px;line-height:14px;font-weight:normal;color:#000;transform:scaleX(0.935);transform-origin:0 0;">16</div>
<div style="position:absolute;left:164px;top:576px;width:43px;height:21px;background:#fff;border:1px solid #cdcea6;border-radius:3px"></div>
<div style="position:absolute;left:165px;top:577px;width:41px;height:19px;border-top:1px solid #6e6e6e;border-left:1px solid #6e6e6e;border-right:1px solid #f6f6e4;border-bottom:1px solid #f6f6e4;border-radius:2px"></div>
<div style="position:absolute;left:208px;top:576px;width:38px;height:21px;background:#fff;border:1px solid #cdcea6;border-radius:3px"></div>
<div style="position:absolute;left:209px;top:577px;width:36px;height:19px;border-top:1px solid #6e6e6e;border-left:1px solid #6e6e6e;border-right:1px solid #f6f6e4;border-bottom:1px solid #f6f6e4;border-radius:2px"></div>
<div style="position:absolute;left:246px;top:576px;width:163px;height:21px;background:#fff;border:1px solid #cdcea6;border-radius:3px"></div>
<div style="position:absolute;left:247px;top:577px;width:161px;height:19px;border-top:1px solid #6e6e6e;border-left:1px solid #6e6e6e;border-right:1px solid #f6f6e4;border-bottom:1px solid #f6f6e4;border-radius:2px"></div>
<div style="position:absolute;left:409px;top:576px;width:221px;height:21px;background:#fff;border:1px solid #cdcea6;border-radius:3px"></div>
<div style="position:absolute;left:410px;top:577px;width:219px;height:19px;border-top:1px solid #6e6e6e;border-left:1px solid #6e6e6e;border-right:1px solid #f6f6e4;border-bottom:1px solid #f6f6e4;border-radius:2px"></div>
<div style="position:absolute;left:630px;top:576px;width:38px;height:21px;background:#fff;border:1px solid #cdcea6;border-radius:3px"></div>
<div style="position:absolute;left:631px;top:577px;width:36px;height:19px;border-top:1px solid #6e6e6e;border-left:1px solid #6e6e6e;border-right:1px solid #f6f6e4;border-bottom:1px solid #f6f6e4;border-radius:2px"></div>
<div style="position:absolute;left:668px;top:576px;width:52px;height:21px;background:#fff;border:1px solid #cdcea6;border-radius:3px"></div>
<div style="position:absolute;left:669px;top:577px;width:50px;height:19px;border-top:1px solid #6e6e6e;border-left:1px solid #6e6e6e;border-right:1px solid #f6f6e4;border-bottom:1px solid #f6f6e4;border-radius:2px"></div>
<div style="position:absolute;left:720px;top:576px;width:57px;height:21px;background:#fff;border:1px solid #cdcea6;border-radius:3px"></div>
<div style="position:absolute;left:721px;top:577px;width:55px;height:19px;border-top:1px solid #6e6e6e;border-left:1px solid #6e6e6e;border-right:1px solid #f6f6e4;border-bottom:1px solid #f6f6e4;border-radius:2px"></div>
<div class="t" style="left:5px;width:200px;top:580px;font-size:14px;line-height:14px;color:#000;text-align:right;transform:scaleX(0.935);transform-origin:100% 0;">13</div>
<div class="t" style="left:211px;top:580px;font-size:14px;line-height:14px;font-weight:normal;color:#000;transform:scaleX(0.935);transform-origin:0 0;">S</div>
<div class="t" style="left:249px;top:580px;font-size:14px;line-height:14px;font-weight:normal;color:#000;transform:scaleX(0.915);transform-origin:0 0;">0000305422</div>
<div class="t" style="left:411px;top:580px;font-size:14px;line-height:14px;font-weight:normal;color:#9e976a;transform:scaleX(0.935);transform-origin:0 0;">E-72F-01/7</div>
<div class="t" style="left:633px;top:580px;font-size:14px;line-height:14px;font-weight:normal;color:#000;transform:scaleX(0.935);transform-origin:0 0;">0</div>
<div class="t" style="left:671px;top:580px;font-size:14px;line-height:14px;font-weight:normal;color:#000;transform:scaleX(0.915);transform-origin:0 0;">2003</div>
<div class="t" style="left:723px;top:580px;font-size:14px;line-height:14px;font-weight:normal;color:#000;transform:scaleX(0.935);transform-origin:0 0;">16</div>
<div style="position:absolute;left:164px;top:597px;width:43px;height:21px;background:#fff;border:1px solid #cdcea6;border-radius:3px"></div>
<div style="position:absolute;left:165px;top:598px;width:41px;height:19px;border-top:1px solid #6e6e6e;border-left:1px solid #6e6e6e;border-right:1px solid #f6f6e4;border-bottom:1px solid #f6f6e4;border-radius:2px"></div>
<div style="position:absolute;left:208px;top:597px;width:38px;height:21px;background:#fff;border:1px solid #cdcea6;border-radius:3px"></div>
<div style="position:absolute;left:209px;top:598px;width:36px;height:19px;border-top:1px solid #6e6e6e;border-left:1px solid #6e6e6e;border-right:1px solid #f6f6e4;border-bottom:1px solid #f6f6e4;border-radius:2px"></div>
<div style="position:absolute;left:246px;top:597px;width:163px;height:21px;background:#fff;border:1px solid #cdcea6;border-radius:3px"></div>
<div style="position:absolute;left:247px;top:598px;width:161px;height:19px;border-top:1px solid #6e6e6e;border-left:1px solid #6e6e6e;border-right:1px solid #f6f6e4;border-bottom:1px solid #f6f6e4;border-radius:2px"></div>
<div style="position:absolute;left:409px;top:597px;width:221px;height:21px;background:#fff;border:1px solid #cdcea6;border-radius:3px"></div>
<div style="position:absolute;left:410px;top:598px;width:219px;height:19px;border-top:1px solid #6e6e6e;border-left:1px solid #6e6e6e;border-right:1px solid #f6f6e4;border-bottom:1px solid #f6f6e4;border-radius:2px"></div>
<div style="position:absolute;left:630px;top:597px;width:38px;height:21px;background:#fff;border:1px solid #cdcea6;border-radius:3px"></div>
<div style="position:absolute;left:631px;top:598px;width:36px;height:19px;border-top:1px solid #6e6e6e;border-left:1px solid #6e6e6e;border-right:1px solid #f6f6e4;border-bottom:1px solid #f6f6e4;border-radius:2px"></div>
<div style="position:absolute;left:668px;top:597px;width:52px;height:21px;background:#fff;border:1px solid #cdcea6;border-radius:3px"></div>
<div style="position:absolute;left:669px;top:598px;width:50px;height:19px;border-top:1px solid #6e6e6e;border-left:1px solid #6e6e6e;border-right:1px solid #f6f6e4;border-bottom:1px solid #f6f6e4;border-radius:2px"></div>
<div style="position:absolute;left:720px;top:597px;width:57px;height:21px;background:#fff;border:1px solid #cdcea6;border-radius:3px"></div>
<div style="position:absolute;left:721px;top:598px;width:55px;height:19px;border-top:1px solid #6e6e6e;border-left:1px solid #6e6e6e;border-right:1px solid #f6f6e4;border-bottom:1px solid #f6f6e4;border-radius:2px"></div>
<div class="t" style="left:5px;width:200px;top:601px;font-size:14px;line-height:14px;color:#000;text-align:right;transform:scaleX(0.935);transform-origin:100% 0;">14</div>
<div class="t" style="left:211px;top:601px;font-size:14px;line-height:14px;font-weight:normal;color:#000;transform:scaleX(0.935);transform-origin:0 0;">S</div>
<div class="t" style="left:249px;top:601px;font-size:14px;line-height:14px;font-weight:normal;color:#000;transform:scaleX(0.915);transform-origin:0 0;">0000305423</div>
<div class="t" style="left:411px;top:601px;font-size:14px;line-height:14px;font-weight:normal;color:#9e976a;transform:scaleX(0.935);transform-origin:0 0;">E-72F-01/7</div>
<div class="t" style="left:633px;top:601px;font-size:14px;line-height:14px;font-weight:normal;color:#000;transform:scaleX(0.935);transform-origin:0 0;">0</div>
<div class="t" style="left:671px;top:601px;font-size:14px;line-height:14px;font-weight:normal;color:#000;transform:scaleX(0.915);transform-origin:0 0;">2003</div>
<div class="t" style="left:723px;top:601px;font-size:14px;line-height:14px;font-weight:normal;color:#000;transform:scaleX(0.935);transform-origin:0 0;">16</div>
<div style="position:absolute;left:164px;top:618px;width:43px;height:21px;background:#fff;border:1px solid #cdcea6;border-radius:3px"></div>
<div style="position:absolute;left:165px;top:619px;width:41px;height:19px;border-top:1px solid #6e6e6e;border-left:1px solid #6e6e6e;border-right:1px solid #f6f6e4;border-bottom:1px solid #f6f6e4;border-radius:2px"></div>
<div style="position:absolute;left:208px;top:618px;width:38px;height:21px;background:#fff;border:1px solid #cdcea6;border-radius:3px"></div>
<div style="position:absolute;left:209px;top:619px;width:36px;height:19px;border-top:1px solid #6e6e6e;border-left:1px solid #6e6e6e;border-right:1px solid #f6f6e4;border-bottom:1px solid #f6f6e4;border-radius:2px"></div>
<div style="position:absolute;left:246px;top:618px;width:163px;height:21px;background:#fff;border:1px solid #cdcea6;border-radius:3px"></div>
<div style="position:absolute;left:247px;top:619px;width:161px;height:19px;border-top:1px solid #6e6e6e;border-left:1px solid #6e6e6e;border-right:1px solid #f6f6e4;border-bottom:1px solid #f6f6e4;border-radius:2px"></div>
<div style="position:absolute;left:409px;top:618px;width:221px;height:21px;background:#fff;border:1px solid #cdcea6;border-radius:3px"></div>
<div style="position:absolute;left:410px;top:619px;width:219px;height:19px;border-top:1px solid #6e6e6e;border-left:1px solid #6e6e6e;border-right:1px solid #f6f6e4;border-bottom:1px solid #f6f6e4;border-radius:2px"></div>
<div style="position:absolute;left:630px;top:618px;width:38px;height:21px;background:#fff;border:1px solid #cdcea6;border-radius:3px"></div>
<div style="position:absolute;left:631px;top:619px;width:36px;height:19px;border-top:1px solid #6e6e6e;border-left:1px solid #6e6e6e;border-right:1px solid #f6f6e4;border-bottom:1px solid #f6f6e4;border-radius:2px"></div>
<div style="position:absolute;left:668px;top:618px;width:52px;height:21px;background:#fff;border:1px solid #cdcea6;border-radius:3px"></div>
<div style="position:absolute;left:669px;top:619px;width:50px;height:19px;border-top:1px solid #6e6e6e;border-left:1px solid #6e6e6e;border-right:1px solid #f6f6e4;border-bottom:1px solid #f6f6e4;border-radius:2px"></div>
<div style="position:absolute;left:720px;top:618px;width:57px;height:21px;background:#fff;border:1px solid #cdcea6;border-radius:3px"></div>
<div style="position:absolute;left:721px;top:619px;width:55px;height:19px;border-top:1px solid #6e6e6e;border-left:1px solid #6e6e6e;border-right:1px solid #f6f6e4;border-bottom:1px solid #f6f6e4;border-radius:2px"></div>
<div class="t" style="left:5px;width:200px;top:622px;font-size:14px;line-height:14px;color:#000;text-align:right;transform:scaleX(0.935);transform-origin:100% 0;">15</div>
<div class="t" style="left:211px;top:622px;font-size:14px;line-height:14px;font-weight:normal;color:#000;transform:scaleX(0.935);transform-origin:0 0;">S</div>
<div class="t" style="left:249px;top:622px;font-size:14px;line-height:14px;font-weight:normal;color:#000;transform:scaleX(0.915);transform-origin:0 0;">0000305424</div>
<div class="t" style="left:411px;top:622px;font-size:14px;line-height:14px;font-weight:normal;color:#9e976a;transform:scaleX(0.935);transform-origin:0 0;">E-72F-01/7</div>
<div class="t" style="left:633px;top:622px;font-size:14px;line-height:14px;font-weight:normal;color:#000;transform:scaleX(0.935);transform-origin:0 0;">0</div>
<div class="t" style="left:671px;top:622px;font-size:14px;line-height:14px;font-weight:normal;color:#000;transform:scaleX(0.915);transform-origin:0 0;">2003</div>
<div class="t" style="left:723px;top:622px;font-size:14px;line-height:14px;font-weight:normal;color:#000;transform:scaleX(0.935);transform-origin:0 0;">16</div>
<div style="position:absolute;left:780px;top:336px;width:12px;height:288px;background:#8080c0"></div>
<div style="position:absolute;left:780px;top:323px;width:12px;height:13px;background:#f2f1dc;border-radius:6px 6px 0 0"></div>
<svg style="position:absolute;left:783px;top:328px" width="8" height="5" viewBox="0 0 8 5" shape-rendering="crispEdges"><path d="M0 5 L4 0.5 L8 5 Z" fill="#5a5a5a" shape-rendering="geometricPrecision"/></svg>
<div style="position:absolute;left:780px;top:336px;width:12px;height:144px;background:#f4f4e4;border-left:1px solid #8080c0;border-right:1px solid #8080c0;border-top:1px solid #505050;border-bottom:1px solid #a0a070"></div>
<svg style="position:absolute;left:780px;top:384px" width="12" height="45" viewBox="0 0 12 45" shape-rendering="crispEdges"><rect x="2" y="8" width="2" height="2" fill="#ffffff"/><path d="M3 11.5 L5.5 9" stroke="#7a7a50" stroke-width="1.1" shape-rendering="geometricPrecision"/><rect x="2" y="16" width="2" height="2" fill="#ffffff"/><path d="M3 19.5 L5.5 17" stroke="#7a7a50" stroke-width="1.1" shape-rendering="geometricPrecision"/><rect x="2" y="24" width="2" height="2" fill="#ffffff"/><path d="M3 27.5 L5.5 25" stroke="#7a7a50" stroke-width="1.1" shape-rendering="geometricPrecision"/><rect x="2" y="32" width="2" height="2" fill="#ffffff"/><path d="M3 35.5 L5.5 33" stroke="#7a7a50" stroke-width="1.1" shape-rendering="geometricPrecision"/><rect x="7" y="4" width="2" height="2" fill="#ffffff"/><path d="M8 7.5 L10.5 5" stroke="#7a7a50" stroke-width="1.1" shape-rendering="geometricPrecision"/><rect x="7" y="12" width="2" height="2" fill="#ffffff"/><path d="M8 15.5 L10.5 13" stroke="#7a7a50" stroke-width="1.1" shape-rendering="geometricPrecision"/><rect x="7" y="20" width="2" height="2" fill="#ffffff"/><path d="M8 23.5 L10.5 21" stroke="#7a7a50" stroke-width="1.1" shape-rendering="geometricPrecision"/><rect x="7" y="28" width="2" height="2" fill="#ffffff"/><path d="M8 31.5 L10.5 29" stroke="#7a7a50" stroke-width="1.1" shape-rendering="geometricPrecision"/><rect x="7" y="36" width="2" height="2" fill="#ffffff"/><path d="M8 39.5 L10.5 37" stroke="#7a7a50" stroke-width="1.1" shape-rendering="geometricPrecision"/></svg>
<div style="position:absolute;left:780px;top:624px;width:12px;height:15px;background:#f2f1dc;border-radius:0 0 6px 6px"></div>
<svg style="position:absolute;left:783px;top:629px" width="8" height="5" viewBox="0 0 8 5" shape-rendering="crispEdges"><path d="M0 0 L4 4.5 L8 0 Z" fill="#5a5a5a" shape-rendering="geometricPrecision"/></svg>
<svg style="position:absolute;left:818px;top:380px" width="118" height="150" viewBox="0 0 118 150" shape-rendering="crispEdges"><path d="M0 6.1 C6 5 12 4.5 17.4 4.5 C28 4.5 37 6.5 45 10.2 L32.8 28.8 C28 27 25 26.4 22.3 26.4 C16 25.6 11 25.4 7.7 25.6 C4 26.2 2 28 0 30.4 Z" fill="#b1c2d5" shape-rendering="geometricPrecision"/><path d="M0 43.4 C8 47 15 51 22.3 56.3 C28 62 32 68 32 76 C32 85 29 92 24 96.9 C17 104 8 108 0 109.8 Z" fill="#a9bbd0" shape-rendering="geometricPrecision"/><path d="M42.2 29.6 L79.9 29.6 L78.1 84 L108 29.6 L118 29.6 L118 71 L68.5 145.4 L29.9 145.4 L53.6 111.2 Z" fill="#a9bbd0" shape-rendering="geometricPrecision"/></svg>
<svg style="position:absolute;left:838px;top:22px" width="46" height="50" viewBox="0 0 46 50" shape-rendering="crispEdges"><path d="M24.5 5.5 L23 3 C19 2.5 15 2.5 13 4.5 C10 7.5 7 13 5.5 19 C4 26 4.5 33 8 38 C11.5 42.5 17 44.8 24.5 44.6 C32 44.3 37 38.5 39.5 31 C41.5 24 41.5 17 39 12 C36.5 7.5 32 5.5 24.5 5.5 Z" fill="none" stroke="#de2222" stroke-width="3.4" stroke-linejoin="round" shape-rendering="geometricPrecision"/></svg>
</body></html>
